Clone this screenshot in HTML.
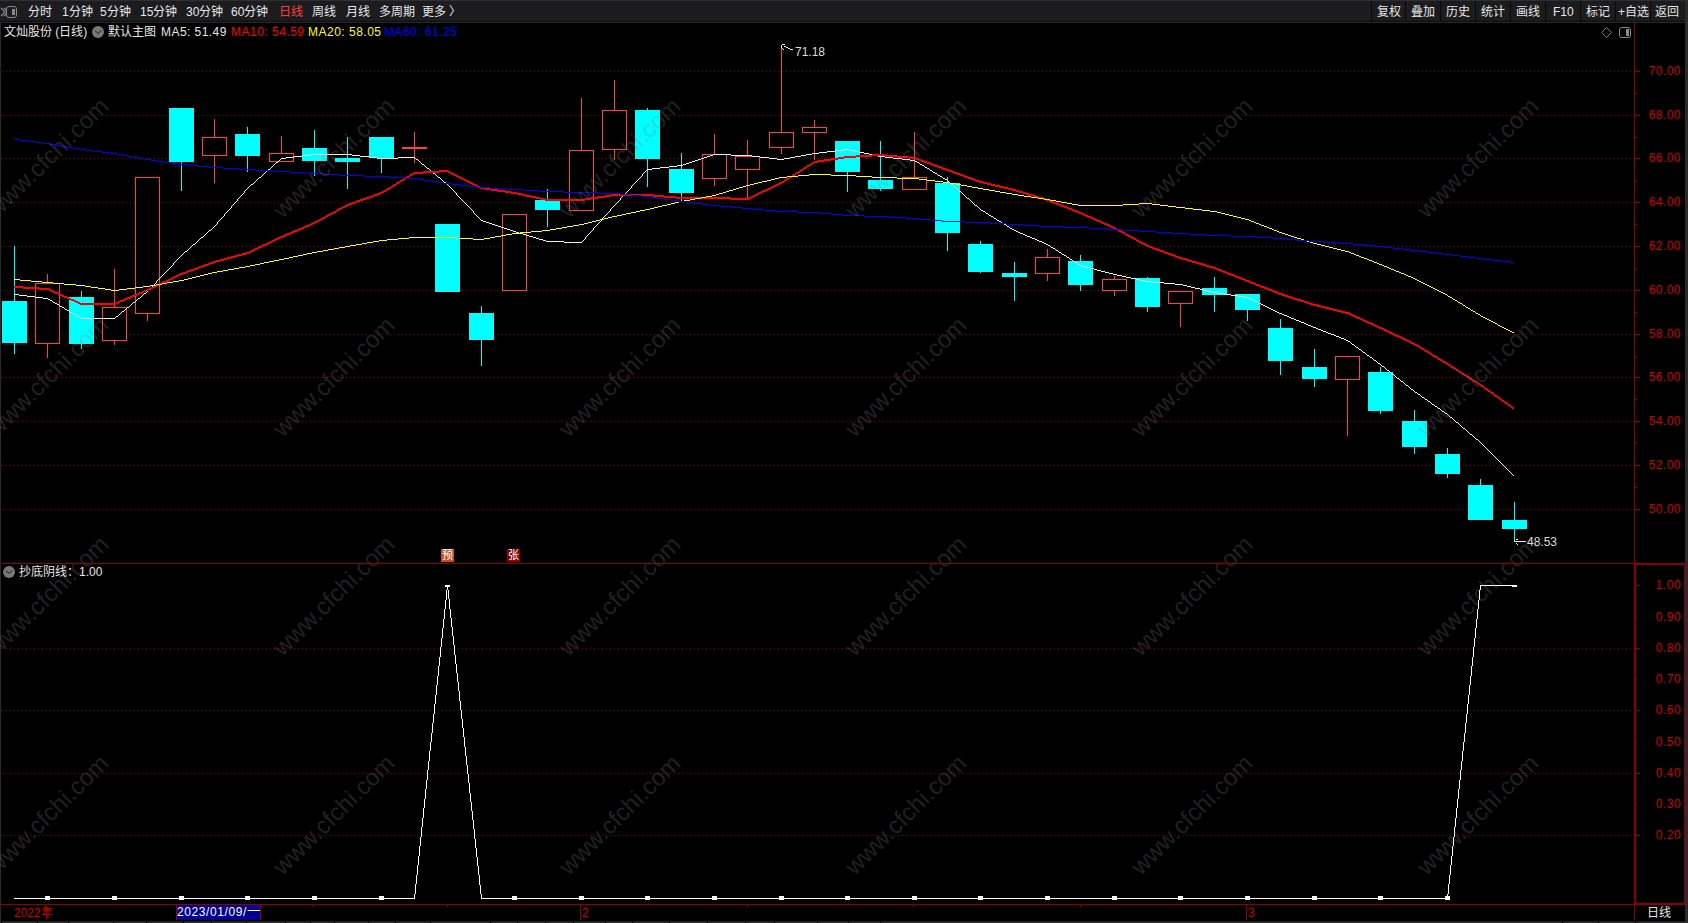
<!DOCTYPE html>
<html lang="zh-CN"><head><meta charset="utf-8"><style>
*{margin:0;padding:0;box-sizing:border-box}
html,body{width:1688px;height:923px;overflow:hidden;background:#000}
body{position:relative;font-family:"Liberation Sans",sans-serif;font-size:12px;color:#e6e6e6}
.abs{position:absolute;white-space:nowrap;line-height:14px}
#tb{position:absolute;left:0;top:0;width:1688px;height:22px;background:#1c1c1e;border-top:1px solid #2c2f35;border-bottom:1px solid #0c0c0c}
#tb .t{position:absolute;top:4px;line-height:14px;white-space:nowrap;color:#e8e8e8}
.btn{position:absolute;top:1px;height:20px;background:#1c1c1e;border-left:1px solid #080808}
.yl{position:absolute;left:1631px;width:50px;text-align:right;color:#cc0000;line-height:16px;font-size:12px;letter-spacing:0.45px}
svg{position:absolute;left:0;top:0}
</style></head><body>
<div id="tb">
<svg width="20" height="21" style="left:0;top:0"><path d="M1,7 l4,4 l-4,4 M4,7 l4,4 l-4,4" stroke="#8a8a8a" stroke-width="1.2" fill="none"/><rect x="6.5" y="5.5" width="10" height="11" rx="2.5" fill="#1c1c1e" stroke="#8a8a8a"/><rect x="12" y="8" width="3" height="6" fill="#8a8a8a"/></svg>
<span class="t" style="left:28px">分时</span>
<span class="t" style="left:62px">1分钟</span>
<span class="t" style="left:100px">5分钟</span>
<span class="t" style="left:140px">15分钟</span>
<span class="t" style="left:186px">30分钟</span>
<span class="t" style="left:231px">60分钟</span>
<span class="t" style="left:279px;color:#ff3c3c">日线</span>
<span class="t" style="left:312px">周线</span>
<span class="t" style="left:346px">月线</span>
<span class="t" style="left:379px">多周期</span>
<span class="t" style="left:422px">更多 〉</span>
</div>
<div class="btn" style="left:1371px;width:35px"></div>
<div class="btn" style="left:1405px;width:35px"></div>
<div class="btn" style="left:1440px;width:35px"></div>
<div class="btn" style="left:1475px;width:35px"></div>
<div class="btn" style="left:1510px;width:35px"></div>
<div class="btn" style="left:1545px;width:35px"></div>
<div class="btn" style="left:1580px;width:35px"></div>
<div class="btn" style="left:1615px;width:35px"></div>
<div class="btn" style="left:1650px;width:35px"></div>
<div class="abs" style="left:1377px;top:5px">复权</div>
<div class="abs" style="left:1411px;top:5px">叠加</div>
<div class="abs" style="left:1446px;top:5px">历史</div>
<div class="abs" style="left:1481px;top:5px">统计</div>
<div class="abs" style="left:1516px;top:5px">画线</div>
<div class="abs" style="left:1553px;top:5px">F10</div>
<div class="abs" style="left:1586px;top:5px">标记</div>
<div class="abs" style="left:1618px;top:5px">+自选</div>
<div class="abs" style="left:1655px;top:5px">返回</div>
<div style="position:absolute;left:0;top:22px;width:1688px;height:1px;background:#2a2a2a"></div>
<div style="position:absolute;left:0;top:22px;width:1px;height:901px;background:#2a2a2a"></div>
<div style="position:absolute;left:1685px;top:0;width:3px;height:923px;background:#2b2b2b"></div>
<svg width="1688" height="923" shape-rendering="crispEdges">
<line x1="2" y1="71.5" x2="1632" y2="71.5" stroke="#8c0000" stroke-width="1" stroke-dasharray="1 3"/>
<line x1="2" y1="115.5" x2="1632" y2="115.5" stroke="#8c0000" stroke-width="1" stroke-dasharray="1 3"/>
<line x1="2" y1="158.5" x2="1632" y2="158.5" stroke="#8c0000" stroke-width="1" stroke-dasharray="1 3"/>
<line x1="2" y1="202.5" x2="1632" y2="202.5" stroke="#8c0000" stroke-width="1" stroke-dasharray="1 3"/>
<line x1="2" y1="246.5" x2="1632" y2="246.5" stroke="#8c0000" stroke-width="1" stroke-dasharray="1 3"/>
<line x1="2" y1="290.5" x2="1632" y2="290.5" stroke="#8c0000" stroke-width="1" stroke-dasharray="1 3"/>
<line x1="2" y1="334.5" x2="1632" y2="334.5" stroke="#8c0000" stroke-width="1" stroke-dasharray="1 3"/>
<line x1="2" y1="377.5" x2="1632" y2="377.5" stroke="#8c0000" stroke-width="1" stroke-dasharray="1 3"/>
<line x1="2" y1="421.5" x2="1632" y2="421.5" stroke="#8c0000" stroke-width="1" stroke-dasharray="1 3"/>
<line x1="2" y1="465.5" x2="1632" y2="465.5" stroke="#8c0000" stroke-width="1" stroke-dasharray="1 3"/>
<line x1="2" y1="509.5" x2="1632" y2="509.5" stroke="#8c0000" stroke-width="1" stroke-dasharray="1 3"/>
<line x1="2" y1="648.5" x2="1632" y2="648.5" stroke="#8c0000" stroke-width="1" stroke-dasharray="1 3"/>
<line x1="2" y1="710.5" x2="1632" y2="710.5" stroke="#8c0000" stroke-width="1" stroke-dasharray="1 3"/>
<line x1="2" y1="773.5" x2="1632" y2="773.5" stroke="#8c0000" stroke-width="1" stroke-dasharray="1 3"/>
<line x1="2" y1="835.5" x2="1632" y2="835.5" stroke="#8c0000" stroke-width="1" stroke-dasharray="1 3"/>
<rect x="14" y="246" width="1" height="55" fill="#00ffff"/>
<rect x="14" y="343" width="1" height="11" fill="#00ffff"/>
<rect x="2" y="301" width="25" height="42" fill="#00ffff"/>
<rect x="47" y="274" width="1" height="9" fill="#ff4040"/>
<rect x="47" y="344" width="1" height="14" fill="#ff4040"/>
<rect x="35" y="283" width="25" height="61" fill="#000"/>
<path d="M35,283h25v61h-25z M36,284v59h23v-59z" fill="#ff4040" fill-rule="evenodd"/>
<rect x="81" y="291" width="1" height="6" fill="#00ffff"/>
<rect x="81" y="344" width="1" height="5" fill="#00ffff"/>
<rect x="69" y="297" width="25" height="47" fill="#00ffff"/>
<rect x="114" y="269" width="1" height="38" fill="#ff4040"/>
<rect x="114" y="341" width="1" height="4" fill="#ff4040"/>
<rect x="102" y="307" width="25" height="34" fill="#000"/>
<path d="M102,307h25v34h-25z M103,308v32h23v-32z" fill="#ff4040" fill-rule="evenodd"/>
<rect x="147" y="314" width="1" height="7" fill="#ff4040"/>
<rect x="135" y="177" width="25" height="137" fill="#000"/>
<path d="M135,177h25v137h-25z M136,178v135h23v-135z" fill="#ff4040" fill-rule="evenodd"/>
<rect x="181" y="162" width="1" height="29" fill="#00ffff"/>
<rect x="169" y="108" width="25" height="54" fill="#00ffff"/>
<rect x="214" y="119" width="1" height="18" fill="#ff4040"/>
<rect x="214" y="156" width="1" height="27" fill="#ff4040"/>
<rect x="202" y="137" width="25" height="19" fill="#000"/>
<path d="M202,137h25v19h-25z M203,138v17h23v-17z" fill="#ff4040" fill-rule="evenodd"/>
<rect x="247" y="127" width="1" height="7" fill="#00ffff"/>
<rect x="247" y="156" width="1" height="16" fill="#00ffff"/>
<rect x="235" y="134" width="25" height="22" fill="#00ffff"/>
<rect x="281" y="136" width="1" height="17" fill="#ff4040"/>
<rect x="269" y="153" width="25" height="9" fill="#000"/>
<path d="M269,153h25v9h-25z M270,154v7h23v-7z" fill="#ff4040" fill-rule="evenodd"/>
<rect x="314" y="130" width="1" height="18" fill="#00ffff"/>
<rect x="314" y="161" width="1" height="15" fill="#00ffff"/>
<rect x="302" y="148" width="25" height="13" fill="#00ffff"/>
<rect x="347" y="137" width="1" height="21" fill="#00ffff"/>
<rect x="347" y="162" width="1" height="27" fill="#00ffff"/>
<rect x="335" y="158" width="25" height="4" fill="#00ffff"/>
<rect x="381" y="158" width="1" height="15" fill="#00ffff"/>
<rect x="369" y="137" width="25" height="21" fill="#00ffff"/>
<rect x="414" y="132" width="1" height="31" fill="#ff4040"/>
<rect x="402" y="147" width="25" height="2" fill="#ff4040"/>
<rect x="435" y="224" width="25" height="68" fill="#00ffff"/>
<rect x="481" y="306" width="1" height="7" fill="#00ffff"/>
<rect x="481" y="340" width="1" height="26" fill="#00ffff"/>
<rect x="469" y="313" width="25" height="27" fill="#00ffff"/>
<rect x="502" y="214" width="25" height="77" fill="#000"/>
<path d="M502,214h25v77h-25z M503,215v75h23v-75z" fill="#ff4040" fill-rule="evenodd"/>
<rect x="547" y="189" width="1" height="11" fill="#00ffff"/>
<rect x="547" y="210" width="1" height="17" fill="#00ffff"/>
<rect x="535" y="200" width="25" height="10" fill="#00ffff"/>
<rect x="581" y="98" width="1" height="52" fill="#ff4040"/>
<rect x="569" y="150" width="25" height="61" fill="#000"/>
<path d="M569,150h25v61h-25z M570,151v59h23v-59z" fill="#ff4040" fill-rule="evenodd"/>
<rect x="614" y="80" width="1" height="30" fill="#ff4040"/>
<rect x="614" y="150" width="1" height="10" fill="#ff4040"/>
<rect x="602" y="110" width="25" height="40" fill="#000"/>
<path d="M602,110h25v40h-25z M603,111v38h23v-38z" fill="#ff4040" fill-rule="evenodd"/>
<rect x="647" y="108" width="1" height="2" fill="#00ffff"/>
<rect x="647" y="159" width="1" height="28" fill="#00ffff"/>
<rect x="635" y="110" width="25" height="49" fill="#00ffff"/>
<rect x="681" y="153" width="1" height="16" fill="#00ffff"/>
<rect x="681" y="193" width="1" height="8" fill="#00ffff"/>
<rect x="669" y="169" width="25" height="24" fill="#00ffff"/>
<rect x="714" y="134" width="1" height="20" fill="#ff4040"/>
<rect x="714" y="179" width="1" height="7" fill="#ff4040"/>
<rect x="702" y="154" width="25" height="25" fill="#000"/>
<path d="M702,154h25v25h-25z M703,155v23h23v-23z" fill="#ff4040" fill-rule="evenodd"/>
<rect x="747" y="140" width="1" height="16" fill="#ff4040"/>
<rect x="747" y="170" width="1" height="30" fill="#ff4040"/>
<rect x="735" y="156" width="25" height="14" fill="#000"/>
<path d="M735,156h25v14h-25z M736,157v12h23v-12z" fill="#ff4040" fill-rule="evenodd"/>
<rect x="781" y="48" width="1" height="84" fill="#ff4040"/>
<rect x="781" y="148" width="1" height="6" fill="#ff4040"/>
<rect x="769" y="132" width="25" height="16" fill="#000"/>
<path d="M769,132h25v16h-25z M770,133v14h23v-14z" fill="#ff4040" fill-rule="evenodd"/>
<rect x="814" y="120" width="1" height="7" fill="#ff4040"/>
<rect x="814" y="133" width="1" height="27" fill="#ff4040"/>
<rect x="802" y="127" width="25" height="6" fill="#000"/>
<path d="M802,127h25v6h-25z M803,128v4h23v-4z" fill="#ff4040" fill-rule="evenodd"/>
<rect x="847" y="172" width="1" height="20" fill="#00ffff"/>
<rect x="835" y="141" width="25" height="31" fill="#00ffff"/>
<rect x="880" y="141" width="1" height="39" fill="#00ffff"/>
<rect x="880" y="189" width="1" height="2" fill="#00ffff"/>
<rect x="868" y="180" width="25" height="9" fill="#00ffff"/>
<rect x="914" y="132" width="1" height="45" fill="#ff4040"/>
<rect x="902" y="177" width="25" height="13" fill="#000"/>
<path d="M902,177h25v13h-25z M903,178v11h23v-11z" fill="#ff4040" fill-rule="evenodd"/>
<rect x="947" y="177" width="1" height="6" fill="#00ffff"/>
<rect x="947" y="233" width="1" height="18" fill="#00ffff"/>
<rect x="935" y="183" width="25" height="50" fill="#00ffff"/>
<rect x="980" y="241" width="1" height="3" fill="#00ffff"/>
<rect x="980" y="272" width="1" height="1" fill="#00ffff"/>
<rect x="968" y="244" width="25" height="28" fill="#00ffff"/>
<rect x="1014" y="262" width="1" height="11" fill="#00ffff"/>
<rect x="1014" y="277" width="1" height="24" fill="#00ffff"/>
<rect x="1002" y="273" width="25" height="4" fill="#00ffff"/>
<rect x="1047" y="249" width="1" height="8" fill="#ff4040"/>
<rect x="1047" y="274" width="1" height="7" fill="#ff4040"/>
<rect x="1035" y="257" width="25" height="17" fill="#000"/>
<path d="M1035,257h25v17h-25z M1036,258v15h23v-15z" fill="#ff4040" fill-rule="evenodd"/>
<rect x="1080" y="255" width="1" height="6" fill="#00ffff"/>
<rect x="1080" y="285" width="1" height="6" fill="#00ffff"/>
<rect x="1068" y="261" width="25" height="24" fill="#00ffff"/>
<rect x="1114" y="276" width="1" height="3" fill="#ff4040"/>
<rect x="1114" y="291" width="1" height="5" fill="#ff4040"/>
<rect x="1102" y="279" width="25" height="12" fill="#000"/>
<path d="M1102,279h25v12h-25z M1103,280v10h23v-10z" fill="#ff4040" fill-rule="evenodd"/>
<rect x="1147" y="277" width="1" height="1" fill="#00ffff"/>
<rect x="1147" y="307" width="1" height="5" fill="#00ffff"/>
<rect x="1135" y="278" width="25" height="29" fill="#00ffff"/>
<rect x="1180" y="304" width="1" height="23" fill="#ff4040"/>
<rect x="1168" y="291" width="25" height="13" fill="#000"/>
<path d="M1168,291h25v13h-25z M1169,292v11h23v-11z" fill="#ff4040" fill-rule="evenodd"/>
<rect x="1214" y="277" width="1" height="11" fill="#00ffff"/>
<rect x="1214" y="295" width="1" height="17" fill="#00ffff"/>
<rect x="1202" y="288" width="25" height="7" fill="#00ffff"/>
<rect x="1247" y="310" width="1" height="11" fill="#00ffff"/>
<rect x="1235" y="294" width="25" height="16" fill="#00ffff"/>
<rect x="1280" y="319" width="1" height="9" fill="#00ffff"/>
<rect x="1280" y="361" width="1" height="14" fill="#00ffff"/>
<rect x="1268" y="328" width="25" height="33" fill="#00ffff"/>
<rect x="1314" y="349" width="1" height="18" fill="#00ffff"/>
<rect x="1314" y="379" width="1" height="8" fill="#00ffff"/>
<rect x="1302" y="367" width="25" height="12" fill="#00ffff"/>
<rect x="1347" y="380" width="1" height="56" fill="#ff4040"/>
<rect x="1335" y="356" width="25" height="24" fill="#000"/>
<path d="M1335,356h25v24h-25z M1336,357v22h23v-22z" fill="#ff4040" fill-rule="evenodd"/>
<rect x="1380" y="367" width="1" height="5" fill="#00ffff"/>
<rect x="1380" y="411" width="1" height="3" fill="#00ffff"/>
<rect x="1368" y="372" width="25" height="39" fill="#00ffff"/>
<rect x="1414" y="410" width="1" height="11" fill="#00ffff"/>
<rect x="1414" y="447" width="1" height="7" fill="#00ffff"/>
<rect x="1402" y="421" width="25" height="26" fill="#00ffff"/>
<rect x="1447" y="448" width="1" height="6" fill="#00ffff"/>
<rect x="1447" y="474" width="1" height="4" fill="#00ffff"/>
<rect x="1435" y="454" width="25" height="20" fill="#00ffff"/>
<rect x="1480" y="479" width="1" height="6" fill="#00ffff"/>
<rect x="1468" y="485" width="25" height="35" fill="#00ffff"/>
<rect x="1514" y="502" width="1" height="18" fill="#00ffff"/>
<rect x="1514" y="529" width="1" height="11" fill="#00ffff"/>
<rect x="1502" y="520" width="25" height="9" fill="#00ffff"/>
<path d="M843 149h7v1h-7zM835 150h8v1h-8zM850 150h5v1h-5zM827 151h8v1h-8zM855 151h4v1h-4zM819 152h8v1h-8zM859 152h5v1h-5zM812 153h7v1h-7zM864 153h5v1h-5zM310 154h42v1h-42zM713 154h18v1h-18zM806 154h6v1h-6zM869 154h4v1h-4zM302 155h8v1h-8zM352 155h8v1h-8zM710 155h3v1h-3zM731 155h21v1h-21zM801 155h5v1h-5zM873 155h5v1h-5zM294 156h8v1h-8zM360 156h9v1h-9zM707 156h3v1h-3zM752 156h8v1h-8zM795 156h6v1h-6zM878 156h7v1h-7zM286 157h8v1h-8zM369 157h8v1h-8zM398 157h17v1h-17zM704 157h3v1h-3zM760 157h9v1h-9zM790 157h5v1h-5zM885 157h8v1h-8zM281 158h5v1h-5zM377 158h21v1h-21zM415 158h1v1h-1zM701 158h3v1h-3zM769 158h8v1h-8zM784 158h6v1h-6zM893 158h9v1h-9zM280 159h1v1h-1zM416 159h2v1h-2zM698 159h3v1h-3zM777 159h7v1h-7zM902 159h8v1h-8zM279 160h1v1h-1zM418 160h1v1h-1zM695 160h3v1h-3zM910 160h5v1h-5zM278 161h1v1h-1zM419 161h1v1h-1zM692 161h3v1h-3zM915 161h2v1h-2zM276 162h2v1h-2zM420 162h1v1h-1zM689 162h3v1h-3zM917 162h2v1h-2zM275 163h1v1h-1zM421 163h1v1h-1zM686 163h3v1h-3zM919 163h1v1h-1zM274 164h1v1h-1zM422 164h2v1h-2zM683 164h3v1h-3zM920 164h2v1h-2zM273 165h1v1h-1zM424 165h1v1h-1zM677 165h6v1h-6zM922 165h2v1h-2zM272 166h1v1h-1zM425 166h1v1h-1zM669 166h8v1h-8zM924 166h1v1h-1zM271 167h1v1h-1zM426 167h1v1h-1zM660 167h9v1h-9zM925 167h2v1h-2zM270 168h1v1h-1zM427 168h2v1h-2zM652 168h8v1h-8zM927 168h2v1h-2zM268 169h2v1h-2zM429 169h1v1h-1zM647 169h5v1h-5zM929 169h1v1h-1zM267 170h1v1h-1zM430 170h1v1h-1zM646 170h1v1h-1zM930 170h2v1h-2zM266 171h1v1h-1zM431 171h1v1h-1zM645 171h1v1h-1zM932 171h1v1h-1zM265 172h1v1h-1zM432 172h1v1h-1zM644 172h1v1h-1zM933 172h2v1h-2zM264 173h1v1h-1zM433 173h2v1h-2zM643 173h1v1h-1zM935 173h2v1h-2zM263 174h1v1h-1zM435 174h1v1h-1zM642 174h1v1h-1zM937 174h1v1h-1zM262 175h1v1h-1zM436 175h1v1h-1zM642 175h1v1h-1zM938 175h2v1h-2zM261 176h1v1h-1zM437 176h1v1h-1zM641 176h1v1h-1zM940 176h2v1h-2zM259 177h2v1h-2zM438 177h2v1h-2zM640 177h1v1h-1zM942 177h1v1h-1zM258 178h1v1h-1zM440 178h1v1h-1zM639 178h1v1h-1zM943 178h2v1h-2zM257 179h1v1h-1zM441 179h1v1h-1zM638 179h1v1h-1zM945 179h2v1h-2zM256 180h1v1h-1zM442 180h1v1h-1zM637 180h1v1h-1zM947 180h1v1h-1zM255 181h1v1h-1zM443 181h1v1h-1zM636 181h1v1h-1zM948 181h1v1h-1zM254 182h1v1h-1zM444 182h2v1h-2zM635 182h1v1h-1zM949 182h1v1h-1zM253 183h1v1h-1zM446 183h1v1h-1zM634 183h1v1h-1zM950 183h1v1h-1zM251 184h2v1h-2zM447 184h1v1h-1zM633 184h1v1h-1zM951 184h2v1h-2zM250 185h1v1h-1zM448 185h1v1h-1zM632 185h1v1h-1zM953 185h1v1h-1zM249 186h1v1h-1zM449 186h1v1h-1zM631 186h1v1h-1zM954 186h1v1h-1zM248 187h1v1h-1zM450 187h1v1h-1zM631 187h1v1h-1zM955 187h1v1h-1zM247 188h1v1h-1zM451 188h1v1h-1zM630 188h1v1h-1zM956 188h1v1h-1zM246 189h1v1h-1zM452 189h1v1h-1zM629 189h1v1h-1zM957 189h1v1h-1zM245 190h1v1h-1zM453 190h1v1h-1zM628 190h1v1h-1zM958 190h1v1h-1zM244 191h1v1h-1zM454 191h1v1h-1zM627 191h1v1h-1zM959 191h2v1h-2zM244 192h1v1h-1zM455 192h1v1h-1zM626 192h1v1h-1zM961 192h1v1h-1zM243 193h1v1h-1zM456 193h1v1h-1zM625 193h1v1h-1zM962 193h1v1h-1zM242 194h1v1h-1zM456 194h1v1h-1zM624 194h1v1h-1zM963 194h1v1h-1zM241 195h1v1h-1zM457 195h1v1h-1zM623 195h1v1h-1zM964 195h1v1h-1zM240 196h1v1h-1zM458 196h1v1h-1zM622 196h1v1h-1zM965 196h1v1h-1zM239 197h1v1h-1zM459 197h1v1h-1zM621 197h1v1h-1zM966 197h1v1h-1zM238 198h1v1h-1zM460 198h1v1h-1zM620 198h1v1h-1zM967 198h2v1h-2zM237 199h1v1h-1zM461 199h1v1h-1zM620 199h1v1h-1zM969 199h1v1h-1zM237 200h1v1h-1zM462 200h1v1h-1zM619 200h1v1h-1zM970 200h1v1h-1zM236 201h1v1h-1zM463 201h1v1h-1zM618 201h1v1h-1zM971 201h1v1h-1zM235 202h1v1h-1zM464 202h1v1h-1zM617 202h1v1h-1zM972 202h1v1h-1zM234 203h1v1h-1zM465 203h1v1h-1zM616 203h1v1h-1zM973 203h1v1h-1zM233 204h1v1h-1zM466 204h1v1h-1zM615 204h1v1h-1zM974 204h1v1h-1zM232 205h1v1h-1zM467 205h1v1h-1zM614 205h1v1h-1zM975 205h2v1h-2zM231 206h1v1h-1zM468 206h1v1h-1zM613 206h1v1h-1zM977 206h1v1h-1zM231 207h1v1h-1zM469 207h1v1h-1zM612 207h1v1h-1zM978 207h1v1h-1zM230 208h1v1h-1zM470 208h1v1h-1zM611 208h1v1h-1zM979 208h1v1h-1zM229 209h1v1h-1zM471 209h1v1h-1zM610 209h1v1h-1zM980 209h1v1h-1zM228 210h1v1h-1zM472 210h1v1h-1zM610 210h1v1h-1zM981 210h2v1h-2zM227 211h1v1h-1zM473 211h1v1h-1zM609 211h1v1h-1zM983 211h2v1h-2zM226 212h1v1h-1zM473 212h1v1h-1zM608 212h1v1h-1zM985 212h1v1h-1zM225 213h1v1h-1zM474 213h1v1h-1zM607 213h1v1h-1zM986 213h2v1h-2zM224 214h1v1h-1zM475 214h1v1h-1zM606 214h1v1h-1zM988 214h1v1h-1zM224 215h1v1h-1zM476 215h1v1h-1zM605 215h1v1h-1zM989 215h2v1h-2zM223 216h1v1h-1zM477 216h1v1h-1zM604 216h1v1h-1zM991 216h2v1h-2zM222 217h1v1h-1zM478 217h1v1h-1zM603 217h1v1h-1zM993 217h1v1h-1zM221 218h1v1h-1zM479 218h1v1h-1zM602 218h1v1h-1zM994 218h2v1h-2zM220 219h1v1h-1zM480 219h1v1h-1zM602 219h1v1h-1zM996 219h1v1h-1zM219 220h1v1h-1zM481 220h2v1h-2zM601 220h1v1h-1zM997 220h2v1h-2zM218 221h1v1h-1zM483 221h3v1h-3zM600 221h1v1h-1zM999 221h2v1h-2zM217 222h1v1h-1zM486 222h3v1h-3zM599 222h1v1h-1zM1001 222h1v1h-1zM217 223h1v1h-1zM489 223h3v1h-3zM598 223h1v1h-1zM1002 223h2v1h-2zM216 224h1v1h-1zM492 224h3v1h-3zM597 224h1v1h-1zM1004 224h2v1h-2zM215 225h1v1h-1zM495 225h3v1h-3zM596 225h1v1h-1zM1006 225h1v1h-1zM214 226h1v1h-1zM498 226h3v1h-3zM595 226h1v1h-1zM1007 226h2v1h-2zM213 227h1v1h-1zM501 227h3v1h-3zM594 227h1v1h-1zM1009 227h1v1h-1zM212 228h1v1h-1zM504 228h3v1h-3zM593 228h1v1h-1zM1010 228h2v1h-2zM211 229h1v1h-1zM507 229h3v1h-3zM593 229h1v1h-1zM1012 229h2v1h-2zM209 230h2v1h-2zM510 230h3v1h-3zM592 230h1v1h-1zM1014 230h2v1h-2zM208 231h1v1h-1zM513 231h3v1h-3zM591 231h1v1h-1zM1016 231h2v1h-2zM207 232h1v1h-1zM516 232h3v1h-3zM590 232h1v1h-1zM1018 232h2v1h-2zM206 233h1v1h-1zM519 233h4v1h-4zM589 233h1v1h-1zM1020 233h3v1h-3zM205 234h1v1h-1zM523 234h3v1h-3zM588 234h1v1h-1zM1023 234h2v1h-2zM204 235h1v1h-1zM526 235h3v1h-3zM587 235h1v1h-1zM1025 235h2v1h-2zM203 236h1v1h-1zM529 236h4v1h-4zM586 236h1v1h-1zM1027 236h3v1h-3zM201 237h2v1h-2zM533 237h3v1h-3zM585 237h1v1h-1zM1030 237h2v1h-2zM200 238h1v1h-1zM536 238h3v1h-3zM585 238h1v1h-1zM1032 238h3v1h-3zM199 239h1v1h-1zM539 239h4v1h-4zM584 239h1v1h-1zM1035 239h2v1h-2zM198 240h1v1h-1zM543 240h3v1h-3zM583 240h1v1h-1zM1037 240h2v1h-2zM197 241h1v1h-1zM546 241h18v1h-18zM582 241h1v1h-1zM1039 241h3v1h-3zM196 242h1v1h-1zM564 242h18v1h-18zM1042 242h2v1h-2zM195 243h1v1h-1zM1044 243h2v1h-2zM193 244h2v1h-2zM1046 244h2v1h-2zM192 245h1v1h-1zM1048 245h2v1h-2zM191 246h1v1h-1zM1050 246h1v1h-1zM190 247h1v1h-1zM1051 247h2v1h-2zM189 248h1v1h-1zM1053 248h2v1h-2zM188 249h1v1h-1zM1055 249h1v1h-1zM187 250h1v1h-1zM1056 250h2v1h-2zM185 251h2v1h-2zM1058 251h1v1h-1zM184 252h1v1h-1zM1059 252h2v1h-2zM183 253h1v1h-1zM1061 253h1v1h-1zM182 254h1v1h-1zM1062 254h2v1h-2zM181 255h1v1h-1zM1064 255h2v1h-2zM180 256h1v1h-1zM1066 256h1v1h-1zM179 257h1v1h-1zM1067 257h2v1h-2zM178 258h1v1h-1zM1069 258h1v1h-1zM177 259h1v1h-1zM1070 259h2v1h-2zM176 260h1v1h-1zM1072 260h1v1h-1zM175 261h1v1h-1zM1073 261h2v1h-2zM174 262h1v1h-1zM1075 262h2v1h-2zM173 263h1v1h-1zM1077 263h1v1h-1zM173 264h1v1h-1zM1078 264h2v1h-2zM172 265h1v1h-1zM1080 265h2v1h-2zM171 266h1v1h-1zM1082 266h4v1h-4zM170 267h1v1h-1zM1086 267h4v1h-4zM169 268h1v1h-1zM1090 268h4v1h-4zM168 269h1v1h-1zM1094 269h3v1h-3zM167 270h1v1h-1zM1097 270h4v1h-4zM166 271h1v1h-1zM1101 271h4v1h-4zM165 272h1v1h-1zM1105 272h4v1h-4zM164 273h1v1h-1zM1109 273h4v1h-4zM163 274h1v1h-1zM1113 274h4v1h-4zM162 275h1v1h-1zM1117 275h5v1h-5zM161 276h1v1h-1zM1122 276h4v1h-4zM160 277h1v1h-1zM1126 277h5v1h-5zM159 278h1v1h-1zM1131 278h5v1h-5zM158 279h1v1h-1zM1136 279h4v1h-4zM157 280h1v1h-1zM1140 280h5v1h-5zM156 281h1v1h-1zM1145 281h8v1h-8zM156 282h1v1h-1zM1153 282h11v1h-11zM155 283h1v1h-1zM1164 283h11v1h-11zM154 284h1v1h-1zM1175 284h8v1h-8zM153 285h1v1h-1zM1183 285h4v1h-4zM152 286h1v1h-1zM1187 286h4v1h-4zM151 287h1v1h-1zM1191 287h4v1h-4zM150 288h1v1h-1zM1195 288h5v1h-5zM149 289h1v1h-1zM1200 289h4v1h-4zM148 290h1v1h-1zM1204 290h4v1h-4zM147 291h1v1h-1zM1208 291h4v1h-4zM146 292h1v1h-1zM1212 292h6v1h-6zM144 293h2v1h-2zM1218 293h6v1h-6zM14 294h5v1h-5zM143 294h1v1h-1zM1224 294h7v1h-7zM19 295h8v1h-8zM142 295h1v1h-1zM1231 295h7v1h-7zM27 296h8v1h-8zM141 296h1v1h-1zM1238 296h6v1h-6zM35 297h8v1h-8zM140 297h1v1h-1zM1244 297h5v1h-5zM43 298h5v1h-5zM138 298h2v1h-2zM1249 298h2v1h-2zM48 299h2v1h-2zM137 299h1v1h-1zM1251 299h2v1h-2zM50 300h2v1h-2zM136 300h1v1h-1zM1253 300h2v1h-2zM52 301h1v1h-1zM135 301h1v1h-1zM1255 301h2v1h-2zM53 302h2v1h-2zM133 302h2v1h-2zM1257 302h2v1h-2zM55 303h2v1h-2zM132 303h1v1h-1zM1259 303h2v1h-2zM57 304h2v1h-2zM131 304h1v1h-1zM1261 304h2v1h-2zM59 305h1v1h-1zM130 305h1v1h-1zM1263 305h2v1h-2zM60 306h2v1h-2zM129 306h1v1h-1zM1265 306h2v1h-2zM62 307h2v1h-2zM127 307h2v1h-2zM1267 307h2v1h-2zM64 308h1v1h-1zM126 308h1v1h-1zM1269 308h2v1h-2zM65 309h2v1h-2zM125 309h1v1h-1zM1271 309h2v1h-2zM67 310h2v1h-2zM124 310h1v1h-1zM1273 310h2v1h-2zM69 311h1v1h-1zM122 311h2v1h-2zM1275 311h2v1h-2zM70 312h2v1h-2zM121 312h1v1h-1zM1277 312h2v1h-2zM72 313h2v1h-2zM120 313h1v1h-1zM1279 313h3v1h-3zM74 314h2v1h-2zM119 314h1v1h-1zM1282 314h2v1h-2zM76 315h1v1h-1zM118 315h1v1h-1zM1284 315h3v1h-3zM77 316h2v1h-2zM116 316h2v1h-2zM1287 316h2v1h-2zM79 317h2v1h-2zM115 317h1v1h-1zM1289 317h2v1h-2zM81 318h34v1h-34zM1291 318h3v1h-3zM1294 319h2v1h-2zM1296 320h3v1h-3zM1299 321h2v1h-2zM1301 322h3v1h-3zM1304 323h2v1h-2zM1306 324h2v1h-2zM1308 325h3v1h-3zM1311 326h2v1h-2zM1313 327h3v1h-3zM1316 328h2v1h-2zM1318 329h3v1h-3zM1321 330h2v1h-2zM1323 331h3v1h-3zM1326 332h2v1h-2zM1328 333h3v1h-3zM1331 334h3v1h-3zM1334 335h2v1h-2zM1336 336h3v1h-3zM1339 337h2v1h-2zM1341 338h3v1h-3zM1344 339h2v1h-2zM1346 340h2v1h-2zM1348 341h2v1h-2zM1350 342h1v1h-1zM1351 343h1v1h-1zM1352 344h2v1h-2zM1354 345h1v1h-1zM1355 346h1v1h-1zM1356 347h2v1h-2zM1358 348h1v1h-1zM1359 349h2v1h-2zM1361 350h1v1h-1zM1362 351h1v1h-1zM1363 352h2v1h-2zM1365 353h1v1h-1zM1366 354h1v1h-1zM1367 355h2v1h-2zM1369 356h1v1h-1zM1370 357h2v1h-2zM1372 358h1v1h-1zM1373 359h1v1h-1zM1374 360h2v1h-2zM1376 361h1v1h-1zM1377 362h1v1h-1zM1378 363h2v1h-2zM1380 364h1v1h-1zM1381 365h1v1h-1zM1382 366h2v1h-2zM1384 367h1v1h-1zM1385 368h1v1h-1zM1386 369h1v1h-1zM1387 370h2v1h-2zM1389 371h1v1h-1zM1390 372h1v1h-1zM1391 373h1v1h-1zM1392 374h2v1h-2zM1394 375h1v1h-1zM1395 376h1v1h-1zM1396 377h1v1h-1zM1397 378h2v1h-2zM1399 379h1v1h-1zM1400 380h1v1h-1zM1401 381h2v1h-2zM1403 382h1v1h-1zM1404 383h1v1h-1zM1405 384h1v1h-1zM1406 385h2v1h-2zM1408 386h1v1h-1zM1409 387h1v1h-1zM1410 388h1v1h-1zM1411 389h2v1h-2zM1413 390h1v1h-1zM1414 391h1v1h-1zM1415 392h2v1h-2zM1417 393h1v1h-1zM1418 394h2v1h-2zM1420 395h1v1h-1zM1421 396h1v1h-1zM1422 397h2v1h-2zM1424 398h1v1h-1zM1425 399h2v1h-2zM1427 400h1v1h-1zM1428 401h2v1h-2zM1430 402h1v1h-1zM1431 403h1v1h-1zM1432 404h2v1h-2zM1434 405h1v1h-1zM1435 406h2v1h-2zM1437 407h1v1h-1zM1438 408h2v1h-2zM1440 409h1v1h-1zM1441 410h1v1h-1zM1442 411h2v1h-2zM1444 412h1v1h-1zM1445 413h2v1h-2zM1447 414h1v1h-1zM1448 415h1v1h-1zM1449 416h1v1h-1zM1450 417h2v1h-2zM1452 418h1v1h-1zM1453 419h1v1h-1zM1454 420h1v1h-1zM1455 421h1v1h-1zM1456 422h2v1h-2zM1458 423h1v1h-1zM1459 424h1v1h-1zM1460 425h1v1h-1zM1461 426h1v1h-1zM1462 427h1v1h-1zM1463 428h2v1h-2zM1465 429h1v1h-1zM1466 430h1v1h-1zM1467 431h1v1h-1zM1468 432h1v1h-1zM1469 433h1v1h-1zM1470 434h2v1h-2zM1472 435h1v1h-1zM1473 436h1v1h-1zM1474 437h1v1h-1zM1475 438h1v1h-1zM1476 439h2v1h-2zM1478 440h1v1h-1zM1479 441h1v1h-1zM1480 442h1v1h-1zM1481 443h1v1h-1zM1482 444h1v1h-1zM1483 445h1v1h-1zM1484 446h1v1h-1zM1485 447h1v1h-1zM1486 448h1v1h-1zM1487 449h1v1h-1zM1488 450h1v1h-1zM1489 451h1v1h-1zM1490 452h1v1h-1zM1491 453h1v1h-1zM1492 454h1v1h-1zM1493 455h1v1h-1zM1494 456h1v1h-1zM1495 457h1v1h-1zM1496 458h1v1h-1zM1497 459h1v1h-1zM1498 460h1v1h-1zM1499 461h1v1h-1zM1500 462h1v1h-1zM1501 463h1v1h-1zM1502 464h1v1h-1zM1503 465h1v1h-1zM1504 466h1v1h-1zM1505 467h1v1h-1zM1506 468h1v1h-1zM1507 469h1v1h-1zM1508 470h1v1h-1zM1509 471h1v1h-1zM1510 472h1v1h-1zM1511 473h1v1h-1zM1512 474h1v1h-1zM1513 475h1v1h-1z" fill="#f0f0f0"/>
<path d="M872 154h14v1h-14zM856 155h41v1h-41zM844 156h28v1h-28zM886 156h23v1h-23zM838 157h18v1h-18zM897 157h19v1h-19zM831 158h13v1h-13zM909 158h10v1h-10zM824 159h14v1h-14zM916 159h5v1h-5zM818 160h13v1h-13zM919 160h5v1h-5zM814 161h10v1h-10zM921 161h6v1h-6zM812 162h6v1h-6zM924 162h6v1h-6zM811 163h3v1h-3zM927 163h5v1h-5zM809 164h3v1h-3zM930 164h5v1h-5zM807 165h4v1h-4zM932 165h6v1h-6zM806 166h3v1h-3zM935 166h6v1h-6zM804 167h3v1h-3zM938 167h5v1h-5zM803 168h3v1h-3zM941 168h5v1h-5zM801 169h3v1h-3zM943 169h6v1h-6zM439 170h9v1h-9zM800 170h3v1h-3zM946 170h6v1h-6zM423 171h27v1h-27zM798 171h3v1h-3zM949 171h5v1h-5zM414 172h25v1h-25zM448 172h4v1h-4zM796 172h4v1h-4zM952 172h5v1h-5zM412 173h11v1h-11zM450 173h4v1h-4zM795 173h3v1h-3zM954 173h6v1h-6zM410 174h4v1h-4zM452 174h4v1h-4zM793 174h3v1h-3zM957 174h6v1h-6zM409 175h3v1h-3zM454 175h4v1h-4zM792 175h3v1h-3zM960 175h5v1h-5zM407 176h3v1h-3zM456 176h4v1h-4zM790 176h3v1h-3zM963 176h5v1h-5zM405 177h4v1h-4zM458 177h4v1h-4zM789 177h3v1h-3zM965 177h6v1h-6zM404 178h3v1h-3zM460 178h4v1h-4zM787 178h3v1h-3zM968 178h6v1h-6zM402 179h3v1h-3zM462 179h4v1h-4zM785 179h4v1h-4zM971 179h5v1h-5zM400 180h4v1h-4zM464 180h4v1h-4zM784 180h3v1h-3zM974 180h5v1h-5zM399 181h3v1h-3zM466 181h4v1h-4zM782 181h3v1h-3zM976 181h7v1h-7zM397 182h3v1h-3zM468 182h4v1h-4zM780 182h4v1h-4zM979 182h8v1h-8zM396 183h3v1h-3zM470 183h4v1h-4zM778 183h4v1h-4zM983 183h8v1h-8zM394 184h3v1h-3zM472 184h4v1h-4zM776 184h4v1h-4zM987 184h8v1h-8zM392 185h4v1h-4zM474 185h4v1h-4zM774 185h4v1h-4zM991 185h9v1h-9zM391 186h3v1h-3zM476 186h4v1h-4zM772 186h4v1h-4zM995 186h9v1h-9zM389 187h3v1h-3zM478 187h7v1h-7zM770 187h4v1h-4zM1000 187h8v1h-8zM387 188h4v1h-4zM480 188h11v1h-11zM768 188h4v1h-4zM1004 188h8v1h-8zM386 189h3v1h-3zM485 189h13v1h-13zM766 189h4v1h-4zM1008 189h8v1h-8zM384 190h3v1h-3zM491 190h14v1h-14zM763 190h5v1h-5zM1012 190h7v1h-7zM382 191h4v1h-4zM498 191h13v1h-13zM761 191h5v1h-5zM1016 191h7v1h-7zM380 192h4v1h-4zM505 192h12v1h-12zM759 192h4v1h-4zM1019 192h7v1h-7zM377 193h5v1h-5zM511 193h11v1h-11zM757 193h4v1h-4zM1023 193h6v1h-6zM374 194h6v1h-6zM517 194h9v1h-9zM611 194h42v1h-42zM755 194h4v1h-4zM1026 194h7v1h-7zM372 195h5v1h-5zM522 195h9v1h-9zM605 195h59v1h-59zM753 195h4v1h-4zM1029 195h7v1h-7zM369 196h5v1h-5zM526 196h10v1h-10zM598 196h13v1h-13zM653 196h23v1h-23zM751 196h4v1h-4zM1033 196h6v1h-6zM366 197h6v1h-6zM531 197h9v1h-9zM591 197h14v1h-14zM664 197h67v1h-67zM749 197h4v1h-4zM1036 197h7v1h-7zM363 198h6v1h-6zM536 198h9v1h-9zM585 198h13v1h-13zM676 198h75v1h-75zM1039 198h7v1h-7zM360 199h6v1h-6zM540 199h51v1h-51zM731 199h18v1h-18zM1043 199h6v1h-6zM357 200h6v1h-6zM545 200h40v1h-40zM1046 200h5v1h-5zM355 201h5v1h-5zM1049 201h5v1h-5zM352 202h5v1h-5zM1051 202h5v1h-5zM349 203h6v1h-6zM1054 203h5v1h-5zM347 204h5v1h-5zM1056 204h5v1h-5zM345 205h4v1h-4zM1059 205h5v1h-5zM343 206h4v1h-4zM1061 206h6v1h-6zM341 207h4v1h-4zM1064 207h5v1h-5zM339 208h4v1h-4zM1067 208h5v1h-5zM337 209h4v1h-4zM1069 209h5v1h-5zM336 210h3v1h-3zM1072 210h5v1h-5zM334 211h3v1h-3zM1074 211h5v1h-5zM332 212h4v1h-4zM1077 212h5v1h-5zM330 213h4v1h-4zM1079 213h5v1h-5zM328 214h4v1h-4zM1082 214h4v1h-4zM326 215h4v1h-4zM1084 215h4v1h-4zM325 216h3v1h-3zM1086 216h5v1h-5zM323 217h3v1h-3zM1088 217h5v1h-5zM321 218h4v1h-4zM1091 218h4v1h-4zM319 219h4v1h-4zM1093 219h4v1h-4zM317 220h4v1h-4zM1095 220h5v1h-5zM315 221h4v1h-4zM1097 221h5v1h-5zM313 222h4v1h-4zM1100 222h4v1h-4zM311 223h4v1h-4zM1102 223h5v1h-5zM309 224h4v1h-4zM1104 224h5v1h-5zM306 225h5v1h-5zM1107 225h4v1h-4zM304 226h5v1h-5zM1109 226h4v1h-4zM302 227h4v1h-4zM1111 227h4v1h-4zM299 228h5v1h-5zM1113 228h4v1h-4zM297 229h5v1h-5zM1115 229h4v1h-4zM294 230h5v1h-5zM1117 230h4v1h-4zM292 231h5v1h-5zM1119 231h4v1h-4zM290 232h4v1h-4zM1121 232h4v1h-4zM287 233h5v1h-5zM1123 233h3v1h-3zM285 234h5v1h-5zM1125 234h3v1h-3zM283 235h4v1h-4zM1126 235h4v1h-4zM280 236h5v1h-5zM1128 236h4v1h-4zM278 237h5v1h-5zM1130 237h4v1h-4zM276 238h4v1h-4zM1132 238h4v1h-4zM274 239h4v1h-4zM1134 239h3v1h-3zM272 240h4v1h-4zM1136 240h3v1h-3zM270 241h4v1h-4zM1137 241h4v1h-4zM268 242h4v1h-4zM1139 242h4v1h-4zM266 243h4v1h-4zM1141 243h4v1h-4zM263 244h5v1h-5zM1143 244h4v1h-4zM261 245h5v1h-5zM1145 245h4v1h-4zM259 246h4v1h-4zM1147 246h5v1h-5zM257 247h4v1h-4zM1149 247h5v1h-5zM255 248h4v1h-4zM1152 248h5v1h-5zM253 249h4v1h-4zM1154 249h6v1h-6zM251 250h4v1h-4zM1157 250h6v1h-6zM249 251h4v1h-4zM1160 251h5v1h-5zM246 252h5v1h-5zM1163 252h5v1h-5zM242 253h7v1h-7zM1165 253h6v1h-6zM238 254h8v1h-8zM1168 254h6v1h-6zM235 255h7v1h-7zM1171 255h5v1h-5zM231 256h7v1h-7zM1174 256h5v1h-5zM227 257h8v1h-8zM1176 257h6v1h-6zM224 258h7v1h-7zM1179 258h7v1h-7zM220 259h7v1h-7zM1182 259h7v1h-7zM216 260h8v1h-8zM1186 260h6v1h-6zM213 261h7v1h-7zM1189 261h7v1h-7zM210 262h6v1h-6zM1192 262h7v1h-7zM208 263h5v1h-5zM1196 263h7v1h-7zM205 264h5v1h-5zM1199 264h7v1h-7zM202 265h6v1h-6zM1203 265h6v1h-6zM199 266h6v1h-6zM1206 266h7v1h-7zM197 267h5v1h-5zM1209 267h7v1h-7zM194 268h5v1h-5zM1213 268h5v1h-5zM191 269h6v1h-6zM1216 269h5v1h-5zM188 270h6v1h-6zM1218 270h5v1h-5zM186 271h5v1h-5zM1221 271h5v1h-5zM183 272h5v1h-5zM1223 272h5v1h-5zM180 273h6v1h-6zM1226 273h5v1h-5zM178 274h5v1h-5zM1228 274h6v1h-6zM176 275h4v1h-4zM1231 275h5v1h-5zM174 276h4v1h-4zM1234 276h5v1h-5zM172 277h4v1h-4zM1236 277h5v1h-5zM170 278h4v1h-4zM1239 278h5v1h-5zM168 279h4v1h-4zM1241 279h5v1h-5zM166 280h4v1h-4zM1244 280h5v1h-5zM163 281h5v1h-5zM1246 281h5v1h-5zM161 282h5v1h-5zM1249 282h5v1h-5zM159 283h4v1h-4zM1251 283h5v1h-5zM157 284h4v1h-4zM1254 284h5v1h-5zM155 285h4v1h-4zM1256 285h5v1h-5zM14 286h9v1h-9zM153 286h4v1h-4zM1259 286h5v1h-5zM14 287h25v1h-25zM151 287h4v1h-4zM1261 287h6v1h-6zM23 288h26v1h-26zM149 288h4v1h-4zM1264 288h5v1h-5zM39 289h12v1h-12zM146 289h5v1h-5zM1267 289h5v1h-5zM49 290h4v1h-4zM144 290h5v1h-5zM1269 290h5v1h-5zM51 291h4v1h-4zM142 291h4v1h-4zM1272 291h5v1h-5zM53 292h5v1h-5zM139 292h5v1h-5zM1274 292h5v1h-5zM55 293h5v1h-5zM137 293h5v1h-5zM1277 293h5v1h-5zM58 294h4v1h-4zM135 294h4v1h-4zM1279 294h6v1h-6zM60 295h4v1h-4zM132 295h5v1h-5zM1282 295h6v1h-6zM62 296h5v1h-5zM130 296h5v1h-5zM1285 296h6v1h-6zM64 297h5v1h-5zM127 297h5v1h-5zM1288 297h6v1h-6zM67 298h4v1h-4zM125 298h5v1h-5zM1291 298h6v1h-6zM69 299h5v1h-5zM123 299h4v1h-4zM1294 299h7v1h-7zM71 300h5v1h-5zM120 300h5v1h-5zM1297 300h7v1h-7zM74 301h4v1h-4zM118 301h5v1h-5zM1301 301h6v1h-6zM76 302h4v1h-4zM116 302h4v1h-4zM1304 302h6v1h-6zM78 303h40v1h-40zM1307 303h6v1h-6zM80 304h36v1h-36zM1310 304h7v1h-7zM1313 305h8v1h-8zM1317 306h8v1h-8zM1321 307h8v1h-8zM1325 308h8v1h-8zM1329 309h8v1h-8zM1333 310h8v1h-8zM1337 311h8v1h-8zM1341 312h8v1h-8zM1345 313h6v1h-6zM1349 314h4v1h-4zM1351 315h4v1h-4zM1353 316h4v1h-4zM1355 317h5v1h-5zM1357 318h5v1h-5zM1360 319h4v1h-4zM1362 320h4v1h-4zM1364 321h4v1h-4zM1366 322h5v1h-5zM1368 323h5v1h-5zM1371 324h4v1h-4zM1373 325h4v1h-4zM1375 326h4v1h-4zM1377 327h5v1h-5zM1379 328h5v1h-5zM1382 329h4v1h-4zM1384 330h4v1h-4zM1386 331h4v1h-4zM1388 332h4v1h-4zM1390 333h4v1h-4zM1392 334h4v1h-4zM1394 335h5v1h-5zM1396 336h5v1h-5zM1399 337h4v1h-4zM1401 338h4v1h-4zM1403 339h4v1h-4zM1405 340h4v1h-4zM1407 341h4v1h-4zM1409 342h4v1h-4zM1411 343h4v1h-4zM1413 344h4v1h-4zM1415 345h4v1h-4zM1417 346h3v1h-3zM1419 347h3v1h-3zM1420 348h4v1h-4zM1422 349h3v1h-3zM1424 350h3v1h-3zM1425 351h4v1h-4zM1427 352h3v1h-3zM1429 353h3v1h-3zM1430 354h3v1h-3zM1432 355h3v1h-3zM1433 356h4v1h-4zM1435 357h3v1h-3zM1437 358h3v1h-3zM1438 359h4v1h-4zM1440 360h3v1h-3zM1442 361h3v1h-3zM1443 362h4v1h-4zM1445 363h3v1h-3zM1447 364h3v1h-3zM1448 365h3v1h-3zM1450 366h3v1h-3zM1451 367h4v1h-4zM1453 368h3v1h-3zM1455 369h3v1h-3zM1456 370h3v1h-3zM1458 371h3v1h-3zM1459 372h3v1h-3zM1461 373h3v1h-3zM1462 374h4v1h-4zM1464 375h3v1h-3zM1466 376h3v1h-3zM1467 377h3v1h-3zM1469 378h3v1h-3zM1470 379h3v1h-3zM1472 380h3v1h-3zM1473 381h4v1h-4zM1475 382h3v1h-3zM1477 383h3v1h-3zM1478 384h3v1h-3zM1480 385h3v1h-3zM1481 386h3v1h-3zM1483 387h2v1h-2zM1484 388h3v1h-3zM1485 389h3v1h-3zM1487 390h3v1h-3zM1488 391h3v1h-3zM1490 392h3v1h-3zM1491 393h3v1h-3zM1493 394h2v1h-2zM1494 395h3v1h-3zM1495 396h3v1h-3zM1497 397h3v1h-3zM1498 398h3v1h-3zM1500 399h2v1h-2zM1501 400h3v1h-3zM1502 401h3v1h-3zM1504 402h3v1h-3zM1505 403h3v1h-3zM1507 404h3v1h-3zM1508 405h3v1h-3zM1510 406h2v1h-2zM1511 407h3v1h-3zM1512 408h2v1h-2z" fill="#ff0000"/>
<path d="M809 174h22v1h-22zM798 175h11v1h-11zM831 175h25v1h-25zM787 176h11v1h-11zM856 176h16v1h-16zM779 177h8v1h-8zM872 177h25v1h-25zM775 178h4v1h-4zM897 178h22v1h-22zM771 179h4v1h-4zM919 179h8v1h-8zM767 180h4v1h-4zM927 180h8v1h-8zM762 181h5v1h-5zM935 181h8v1h-8zM758 182h4v1h-4zM943 182h7v1h-7zM754 183h4v1h-4zM950 183h6v1h-6zM750 184h4v1h-4zM956 184h5v1h-5zM746 185h4v1h-4zM961 185h6v1h-6zM743 186h3v1h-3zM967 186h5v1h-5zM739 187h4v1h-4zM972 187h6v1h-6zM736 188h3v1h-3zM978 188h5v1h-5zM733 189h3v1h-3zM983 189h6v1h-6zM729 190h4v1h-4zM989 190h6v1h-6zM726 191h3v1h-3zM995 191h5v1h-5zM723 192h3v1h-3zM1000 192h6v1h-6zM719 193h4v1h-4zM1006 193h6v1h-6zM716 194h3v1h-3zM1012 194h6v1h-6zM712 195h4v1h-4zM1018 195h6v1h-6zM706 196h6v1h-6zM1024 196h7v1h-7zM701 197h5v1h-5zM1031 197h7v1h-7zM695 198h6v1h-6zM1038 198h6v1h-6zM690 199h5v1h-5zM1044 199h6v1h-6zM684 200h6v1h-6zM1050 200h6v1h-6zM679 201h5v1h-5zM1056 201h5v1h-5zM675 202h4v1h-4zM1061 202h6v1h-6zM671 203h4v1h-4zM1067 203h5v1h-5zM1139 203h13v1h-13zM667 204h4v1h-4zM1072 204h6v1h-6zM1123 204h16v1h-16zM1152 204h8v1h-8zM662 205h5v1h-5zM1078 205h45v1h-45zM1160 205h8v1h-8zM658 206h4v1h-4zM1168 206h8v1h-8zM654 207h4v1h-4zM1176 207h9v1h-9zM650 208h4v1h-4zM1185 208h8v1h-8zM645 209h5v1h-5zM1193 209h9v1h-9zM640 210h5v1h-5zM1202 210h8v1h-8zM636 211h4v1h-4zM1210 211h7v1h-7zM631 212h5v1h-5zM1217 212h4v1h-4zM626 213h5v1h-5zM1221 213h4v1h-4zM622 214h4v1h-4zM1225 214h4v1h-4zM617 215h5v1h-5zM1229 215h4v1h-4zM612 216h5v1h-5zM1233 216h4v1h-4zM608 217h4v1h-4zM1237 217h4v1h-4zM604 218h4v1h-4zM1241 218h4v1h-4zM600 219h4v1h-4zM1245 219h4v1h-4zM596 220h4v1h-4zM1249 220h2v1h-2zM592 221h4v1h-4zM1251 221h3v1h-3zM588 222h4v1h-4zM1254 222h2v1h-2zM584 223h4v1h-4zM1256 223h3v1h-3zM579 224h5v1h-5zM1259 224h2v1h-2zM573 225h6v1h-6zM1261 225h3v1h-3zM567 226h6v1h-6zM1264 226h3v1h-3zM562 227h5v1h-5zM1267 227h2v1h-2zM556 228h6v1h-6zM1269 228h3v1h-3zM550 229h6v1h-6zM1272 229h2v1h-2zM542 230h8v1h-8zM1274 230h3v1h-3zM531 231h11v1h-11zM1277 231h2v1h-2zM520 232h11v1h-11zM1279 232h3v1h-3zM512 233h8v1h-8zM1282 233h3v1h-3zM506 234h6v1h-6zM1285 234h3v1h-3zM501 235h5v1h-5zM1288 235h3v1h-3zM495 236h6v1h-6zM1291 236h3v1h-3zM409 237h47v1h-47zM490 237h5v1h-5zM1294 237h3v1h-3zM398 238h11v1h-11zM456 238h17v1h-17zM484 238h6v1h-6zM1297 238h4v1h-4zM387 239h11v1h-11zM473 239h11v1h-11zM1301 239h3v1h-3zM379 240h8v1h-8zM1304 240h3v1h-3zM373 241h6v1h-6zM1307 241h3v1h-3zM367 242h6v1h-6zM1310 242h3v1h-3zM362 243h5v1h-5zM1313 243h4v1h-4zM356 244h6v1h-6zM1317 244h4v1h-4zM350 245h6v1h-6zM1321 245h4v1h-4zM345 246h5v1h-5zM1325 246h4v1h-4zM339 247h6v1h-6zM1329 247h4v1h-4zM334 248h5v1h-5zM1333 248h4v1h-4zM328 249h6v1h-6zM1337 249h4v1h-4zM323 250h5v1h-5zM1341 250h4v1h-4zM317 251h6v1h-6zM1345 251h4v1h-4zM312 252h5v1h-5zM1349 252h2v1h-2zM307 253h5v1h-5zM1351 253h3v1h-3zM303 254h4v1h-4zM1354 254h2v1h-2zM298 255h5v1h-5zM1356 255h3v1h-3zM293 256h5v1h-5zM1359 256h2v1h-2zM289 257h4v1h-4zM1361 257h3v1h-3zM284 258h5v1h-5zM1364 258h3v1h-3zM279 259h5v1h-5zM1367 259h2v1h-2zM274 260h5v1h-5zM1369 260h3v1h-3zM269 261h5v1h-5zM1372 261h2v1h-2zM264 262h5v1h-5zM1374 262h3v1h-3zM260 263h4v1h-4zM1377 263h2v1h-2zM255 264h5v1h-5zM1379 264h3v1h-3zM250 265h5v1h-5zM1382 265h2v1h-2zM245 266h5v1h-5zM1384 266h3v1h-3zM239 267h6v1h-6zM1387 267h2v1h-2zM234 268h5v1h-5zM1389 268h2v1h-2zM228 269h6v1h-6zM1391 269h3v1h-3zM223 270h5v1h-5zM1394 270h2v1h-2zM217 271h6v1h-6zM1396 271h3v1h-3zM212 272h5v1h-5zM1399 272h2v1h-2zM208 273h4v1h-4zM1401 273h3v1h-3zM204 274h4v1h-4zM1404 274h2v1h-2zM200 275h4v1h-4zM1406 275h2v1h-2zM196 276h4v1h-4zM1408 276h3v1h-3zM192 277h4v1h-4zM1411 277h2v1h-2zM188 278h4v1h-4zM1413 278h2v1h-2zM14 279h6v1h-6zM184 279h4v1h-4zM1415 279h2v1h-2zM20 280h11v1h-11zM179 280h5v1h-5zM1417 280h2v1h-2zM31 281h11v1h-11zM173 281h6v1h-6zM1419 281h2v1h-2zM42 282h11v1h-11zM167 282h6v1h-6zM1421 282h2v1h-2zM53 283h11v1h-11zM162 283h5v1h-5zM1423 283h2v1h-2zM64 284h12v1h-12zM156 284h6v1h-6zM1425 284h2v1h-2zM76 285h9v1h-9zM150 285h6v1h-6zM1427 285h2v1h-2zM85 286h6v1h-6zM143 286h7v1h-7zM1429 286h2v1h-2zM91 287h7v1h-7zM135 287h8v1h-8zM1431 287h2v1h-2zM98 288h7v1h-7zM127 288h8v1h-8zM1433 288h2v1h-2zM105 289h6v1h-6zM119 289h8v1h-8zM1435 289h2v1h-2zM111 290h8v1h-8zM1437 290h2v1h-2zM1439 291h2v1h-2zM1441 292h2v1h-2zM1443 293h2v1h-2zM1445 294h2v1h-2zM1447 295h1v1h-1zM1448 296h2v1h-2zM1450 297h2v1h-2zM1452 298h1v1h-1zM1453 299h2v1h-2zM1455 300h2v1h-2zM1457 301h1v1h-1zM1458 302h2v1h-2zM1460 303h2v1h-2zM1462 304h1v1h-1zM1463 305h2v1h-2zM1465 306h1v1h-1zM1466 307h2v1h-2zM1468 308h2v1h-2zM1470 309h1v1h-1zM1471 310h2v1h-2zM1473 311h2v1h-2zM1475 312h1v1h-1zM1476 313h2v1h-2zM1478 314h2v1h-2zM1480 315h1v1h-1zM1481 316h2v1h-2zM1483 317h2v1h-2zM1485 318h2v1h-2zM1487 319h2v1h-2zM1489 320h2v1h-2zM1491 321h2v1h-2zM1493 322h2v1h-2zM1495 323h2v1h-2zM1497 324h1v1h-1zM1498 325h2v1h-2zM1500 326h2v1h-2zM1502 327h2v1h-2zM1504 328h2v1h-2zM1506 329h2v1h-2zM1508 330h2v1h-2zM1510 331h2v1h-2zM1512 332h2v1h-2z" fill="#ffff00"/>
<path d="M14 139h5v1h-5zM19 140h8v1h-8zM27 141h8v1h-8zM35 142h8v1h-8zM43 143h7v1h-7zM50 144h6v1h-6zM56 145h6v1h-6zM62 146h5v1h-5zM67 147h6v1h-6zM73 148h6v1h-6zM79 149h7v1h-7zM86 150h8v1h-8zM94 151h8v1h-8zM102 152h8v1h-8zM110 153h7v1h-7zM117 154h6v1h-6zM123 155h5v1h-5zM128 156h6v1h-6zM134 157h5v1h-5zM139 158h6v1h-6zM145 159h6v1h-6zM151 160h7v1h-7zM158 161h6v1h-6zM164 162h7v1h-7zM171 163h7v1h-7zM178 164h9v1h-9zM187 165h11v1h-11zM198 166h11v1h-11zM209 167h14v1h-14zM223 168h16v1h-16zM239 169h17v1h-17zM256 170h17v1h-17zM273 171h17v1h-17zM290 172h16v1h-16zM306 173h17v1h-17zM323 174h16v1h-16zM339 175h25v1h-25zM364 176h26v1h-26zM390 177h16v1h-16zM406 178h12v1h-12zM418 179h6v1h-6zM424 180h7v1h-7zM431 181h7v1h-7zM438 182h6v1h-6zM444 183h8v1h-8zM452 184h8v1h-8zM460 185h9v1h-9zM469 186h8v1h-8zM477 187h13v1h-13zM490 188h16v1h-16zM506 189h17v1h-17zM523 190h16v1h-16zM539 191h25v1h-25zM564 192h34v1h-34zM598 193h22v1h-22zM620 194h11v1h-11zM631 195h11v1h-11zM642 196h9v1h-9zM651 197h7v1h-7zM658 198h6v1h-6zM664 199h7v1h-7zM671 200h7v1h-7zM678 201h8v1h-8zM686 202h8v1h-8zM694 203h8v1h-8zM702 204h8v1h-8zM710 205h10v1h-10zM720 206h11v1h-11zM731 207h11v1h-11zM742 208h11v1h-11zM753 209h11v1h-11zM764 210h12v1h-12zM776 211h22v1h-22zM798 212h22v1h-22zM820 213h11v1h-11zM831 214h11v1h-11zM842 215h22v1h-22zM864 216h25v1h-25zM889 217h17v1h-17zM906 218h14v1h-14zM920 219h11v1h-11zM931 220h11v1h-11zM942 221h22v1h-22zM964 222h25v1h-25zM989 223h17v1h-17zM1006 224h17v1h-17zM1023 225h16v1h-16zM1039 226h25v1h-25zM1064 227h25v1h-25zM1089 228h17v1h-17zM1106 229h17v1h-17zM1123 230h16v1h-16zM1139 231h17v1h-17zM1156 232h16v1h-16zM1172 233h17v1h-17zM1189 234h17v1h-17zM1206 235h25v1h-25zM1231 236h25v1h-25zM1256 237h16v1h-16zM1272 238h14v1h-14zM1286 239h11v1h-11zM1297 240h12v1h-12zM1309 241h14v1h-14zM1323 242h16v1h-16zM1339 243h14v1h-14zM1353 244h11v1h-11zM1364 245h11v1h-11zM1375 246h10v1h-10zM1385 247h8v1h-8zM1393 248h9v1h-9zM1402 249h8v1h-8zM1410 250h9v1h-9zM1419 251h8v1h-8zM1427 252h8v1h-8zM1435 253h8v1h-8zM1443 254h9v1h-9zM1452 255h8v1h-8zM1460 256h8v1h-8zM1468 257h8v1h-8zM1476 258h9v1h-9zM1485 259h8v1h-8zM1493 260h9v1h-9zM1502 261h8v1h-8zM1510 262h4v1h-4z" fill="#0000ff"/>
<rect x="782" y="44" width="3" height="1" fill="#e6e6e6"/>
<rect x="781" y="45" width="1" height="3" fill="#e6e6e6"/>
<rect x="782" y="48" width="1" height="1" fill="#e6e6e6"/>
<rect x="783" y="49" width="1" height="1" fill="#e6e6e6"/>
<rect x="784" y="46" width="2" height="1" fill="#e6e6e6"/>
<rect x="786" y="47" width="2" height="1" fill="#e6e6e6"/>
<rect x="788" y="48" width="2" height="1" fill="#e6e6e6"/>
<rect x="790" y="49" width="3" height="1" fill="#e6e6e6"/>
<rect x="1514" y="540" width="1" height="2" fill="#e6e6e6"/>
<rect x="1516" y="539" width="2" height="1" fill="#e6e6e6"/>
<rect x="1515" y="541" width="11" height="1" fill="#e6e6e6"/>
<rect x="1516" y="543" width="1" height="1" fill="#e6e6e6"/>
<rect x="1517" y="544" width="1" height="1" fill="#e6e6e6"/>
<path d="M447 585h1v1h-1zM1480 585h34v1h-34zM447 586h1v1h-1zM1480 586h1v1h-1zM447 587h1v1h-1zM1480 587h1v1h-1zM447 588h1v1h-1zM1480 588h1v1h-1zM447 589h1v1h-1zM1480 589h1v1h-1zM446 590h1v1h-1zM448 590h1v1h-1zM1479 590h1v1h-1zM446 591h1v1h-1zM448 591h1v1h-1zM1479 591h1v1h-1zM446 592h1v1h-1zM448 592h1v1h-1zM1479 592h1v1h-1zM446 593h1v1h-1zM448 593h1v1h-1zM1479 593h1v1h-1zM446 594h1v1h-1zM448 594h1v1h-1zM1479 594h1v1h-1zM446 595h1v1h-1zM448 595h1v1h-1zM1479 595h1v1h-1zM446 596h1v1h-1zM448 596h1v1h-1zM1479 596h1v1h-1zM446 597h1v1h-1zM448 597h1v1h-1zM1479 597h1v1h-1zM446 598h1v1h-1zM448 598h1v1h-1zM1479 598h1v1h-1zM446 599h1v1h-1zM449 599h1v1h-1zM1479 599h1v1h-1zM445 600h1v1h-1zM449 600h1v1h-1zM1478 600h1v1h-1zM445 601h1v1h-1zM449 601h1v1h-1zM1478 601h1v1h-1zM445 602h1v1h-1zM449 602h1v1h-1zM1478 602h1v1h-1zM445 603h1v1h-1zM449 603h1v1h-1zM1478 603h1v1h-1zM445 604h1v1h-1zM449 604h1v1h-1zM1478 604h1v1h-1zM445 605h1v1h-1zM449 605h1v1h-1zM1478 605h1v1h-1zM445 606h1v1h-1zM449 606h1v1h-1zM1478 606h1v1h-1zM445 607h1v1h-1zM449 607h1v1h-1zM1478 607h1v1h-1zM445 608h1v1h-1zM449 608h1v1h-1zM1478 608h1v1h-1zM444 609h1v1h-1zM450 609h1v1h-1zM1477 609h1v1h-1zM444 610h1v1h-1zM450 610h1v1h-1zM1477 610h1v1h-1zM444 611h1v1h-1zM450 611h1v1h-1zM1477 611h1v1h-1zM444 612h1v1h-1zM450 612h1v1h-1zM1477 612h1v1h-1zM444 613h1v1h-1zM450 613h1v1h-1zM1477 613h1v1h-1zM444 614h1v1h-1zM450 614h1v1h-1zM1477 614h1v1h-1zM444 615h1v1h-1zM450 615h1v1h-1zM1477 615h1v1h-1zM444 616h1v1h-1zM450 616h1v1h-1zM1477 616h1v1h-1zM444 617h1v1h-1zM450 617h1v1h-1zM1477 617h1v1h-1zM444 618h1v1h-1zM451 618h1v1h-1zM1477 618h1v1h-1zM443 619h1v1h-1zM451 619h1v1h-1zM1476 619h1v1h-1zM443 620h1v1h-1zM451 620h1v1h-1zM1476 620h1v1h-1zM443 621h1v1h-1zM451 621h1v1h-1zM1476 621h1v1h-1zM443 622h1v1h-1zM451 622h1v1h-1zM1476 622h1v1h-1zM443 623h1v1h-1zM451 623h1v1h-1zM1476 623h1v1h-1zM443 624h1v1h-1zM451 624h1v1h-1zM1476 624h1v1h-1zM443 625h1v1h-1zM451 625h1v1h-1zM1476 625h1v1h-1zM443 626h1v1h-1zM451 626h1v1h-1zM1476 626h1v1h-1zM443 627h1v1h-1zM452 627h1v1h-1zM1476 627h1v1h-1zM442 628h1v1h-1zM452 628h1v1h-1zM1475 628h1v1h-1zM442 629h1v1h-1zM452 629h1v1h-1zM1475 629h1v1h-1zM442 630h1v1h-1zM452 630h1v1h-1zM1475 630h1v1h-1zM442 631h1v1h-1zM452 631h1v1h-1zM1475 631h1v1h-1zM442 632h1v1h-1zM452 632h1v1h-1zM1475 632h1v1h-1zM442 633h1v1h-1zM452 633h1v1h-1zM1475 633h1v1h-1zM442 634h1v1h-1zM452 634h1v1h-1zM1475 634h1v1h-1zM442 635h1v1h-1zM452 635h1v1h-1zM1475 635h1v1h-1zM442 636h1v1h-1zM453 636h1v1h-1zM1475 636h1v1h-1zM442 637h1v1h-1zM453 637h1v1h-1zM1475 637h1v1h-1zM441 638h1v1h-1zM453 638h1v1h-1zM1474 638h1v1h-1zM441 639h1v1h-1zM453 639h1v1h-1zM1474 639h1v1h-1zM441 640h1v1h-1zM453 640h1v1h-1zM1474 640h1v1h-1zM441 641h1v1h-1zM453 641h1v1h-1zM1474 641h1v1h-1zM441 642h1v1h-1zM453 642h1v1h-1zM1474 642h1v1h-1zM441 643h1v1h-1zM453 643h1v1h-1zM1474 643h1v1h-1zM441 644h1v1h-1zM453 644h1v1h-1zM1474 644h1v1h-1zM441 645h1v1h-1zM454 645h1v1h-1zM1474 645h1v1h-1zM441 646h1v1h-1zM454 646h1v1h-1zM1474 646h1v1h-1zM440 647h1v1h-1zM454 647h1v1h-1zM1473 647h1v1h-1zM440 648h1v1h-1zM454 648h1v1h-1zM1473 648h1v1h-1zM440 649h1v1h-1zM454 649h1v1h-1zM1473 649h1v1h-1zM440 650h1v1h-1zM454 650h1v1h-1zM1473 650h1v1h-1zM440 651h1v1h-1zM454 651h1v1h-1zM1473 651h1v1h-1zM440 652h1v1h-1zM454 652h1v1h-1zM1473 652h1v1h-1zM440 653h1v1h-1zM454 653h1v1h-1zM1473 653h1v1h-1zM440 654h1v1h-1zM454 654h1v1h-1zM1473 654h1v1h-1zM440 655h1v1h-1zM455 655h1v1h-1zM1473 655h1v1h-1zM440 656h1v1h-1zM455 656h1v1h-1zM1473 656h1v1h-1zM439 657h1v1h-1zM455 657h1v1h-1zM1472 657h1v1h-1zM439 658h1v1h-1zM455 658h1v1h-1zM1472 658h1v1h-1zM439 659h1v1h-1zM455 659h1v1h-1zM1472 659h1v1h-1zM439 660h1v1h-1zM455 660h1v1h-1zM1472 660h1v1h-1zM439 661h1v1h-1zM455 661h1v1h-1zM1472 661h1v1h-1zM439 662h1v1h-1zM455 662h1v1h-1zM1472 662h1v1h-1zM439 663h1v1h-1zM455 663h1v1h-1zM1472 663h1v1h-1zM439 664h1v1h-1zM456 664h1v1h-1zM1472 664h1v1h-1zM439 665h1v1h-1zM456 665h1v1h-1zM1472 665h1v1h-1zM438 666h1v1h-1zM456 666h1v1h-1zM1471 666h1v1h-1zM438 667h1v1h-1zM456 667h1v1h-1zM1471 667h1v1h-1zM438 668h1v1h-1zM456 668h1v1h-1zM1471 668h1v1h-1zM438 669h1v1h-1zM456 669h1v1h-1zM1471 669h1v1h-1zM438 670h1v1h-1zM456 670h1v1h-1zM1471 670h1v1h-1zM438 671h1v1h-1zM456 671h1v1h-1zM1471 671h1v1h-1zM438 672h1v1h-1zM456 672h1v1h-1zM1471 672h1v1h-1zM438 673h1v1h-1zM457 673h1v1h-1zM1471 673h1v1h-1zM438 674h1v1h-1zM457 674h1v1h-1zM1471 674h1v1h-1zM438 675h1v1h-1zM457 675h1v1h-1zM1471 675h1v1h-1zM437 676h1v1h-1zM457 676h1v1h-1zM1470 676h1v1h-1zM437 677h1v1h-1zM457 677h1v1h-1zM1470 677h1v1h-1zM437 678h1v1h-1zM457 678h1v1h-1zM1470 678h1v1h-1zM437 679h1v1h-1zM457 679h1v1h-1zM1470 679h1v1h-1zM437 680h1v1h-1zM457 680h1v1h-1zM1470 680h1v1h-1zM437 681h1v1h-1zM457 681h1v1h-1zM1470 681h1v1h-1zM437 682h1v1h-1zM458 682h1v1h-1zM1470 682h1v1h-1zM437 683h1v1h-1zM458 683h1v1h-1zM1470 683h1v1h-1zM437 684h1v1h-1zM458 684h1v1h-1zM1470 684h1v1h-1zM436 685h1v1h-1zM458 685h1v1h-1zM1469 685h1v1h-1zM436 686h1v1h-1zM458 686h1v1h-1zM1469 686h1v1h-1zM436 687h1v1h-1zM458 687h1v1h-1zM1469 687h1v1h-1zM436 688h1v1h-1zM458 688h1v1h-1zM1469 688h1v1h-1zM436 689h1v1h-1zM458 689h1v1h-1zM1469 689h1v1h-1zM436 690h1v1h-1zM458 690h1v1h-1zM1469 690h1v1h-1zM436 691h1v1h-1zM459 691h1v1h-1zM1469 691h1v1h-1zM436 692h1v1h-1zM459 692h1v1h-1zM1469 692h1v1h-1zM436 693h1v1h-1zM459 693h1v1h-1zM1469 693h1v1h-1zM436 694h1v1h-1zM459 694h1v1h-1zM1469 694h1v1h-1zM435 695h1v1h-1zM459 695h1v1h-1zM1468 695h1v1h-1zM435 696h1v1h-1zM459 696h1v1h-1zM1468 696h1v1h-1zM435 697h1v1h-1zM459 697h1v1h-1zM1468 697h1v1h-1zM435 698h1v1h-1zM459 698h1v1h-1zM1468 698h1v1h-1zM435 699h1v1h-1zM459 699h1v1h-1zM1468 699h1v1h-1zM435 700h1v1h-1zM459 700h1v1h-1zM1468 700h1v1h-1zM435 701h1v1h-1zM460 701h1v1h-1zM1468 701h1v1h-1zM435 702h1v1h-1zM460 702h1v1h-1zM1468 702h1v1h-1zM435 703h1v1h-1zM460 703h1v1h-1zM1468 703h1v1h-1zM434 704h1v1h-1zM460 704h1v1h-1zM1467 704h1v1h-1zM434 705h1v1h-1zM460 705h1v1h-1zM1467 705h1v1h-1zM434 706h1v1h-1zM460 706h1v1h-1zM1467 706h1v1h-1zM434 707h1v1h-1zM460 707h1v1h-1zM1467 707h1v1h-1zM434 708h1v1h-1zM460 708h1v1h-1zM1467 708h1v1h-1zM434 709h1v1h-1zM460 709h1v1h-1zM1467 709h1v1h-1zM434 710h1v1h-1zM461 710h1v1h-1zM1467 710h1v1h-1zM434 711h1v1h-1zM461 711h1v1h-1zM1467 711h1v1h-1zM434 712h1v1h-1zM461 712h1v1h-1zM1467 712h1v1h-1zM434 713h1v1h-1zM461 713h1v1h-1zM1467 713h1v1h-1zM433 714h1v1h-1zM461 714h1v1h-1zM1466 714h1v1h-1zM433 715h1v1h-1zM461 715h1v1h-1zM1466 715h1v1h-1zM433 716h1v1h-1zM461 716h1v1h-1zM1466 716h1v1h-1zM433 717h1v1h-1zM461 717h1v1h-1zM1466 717h1v1h-1zM433 718h1v1h-1zM461 718h1v1h-1zM1466 718h1v1h-1zM433 719h1v1h-1zM462 719h1v1h-1zM1466 719h1v1h-1zM433 720h1v1h-1zM462 720h1v1h-1zM1466 720h1v1h-1zM433 721h1v1h-1zM462 721h1v1h-1zM1466 721h1v1h-1zM433 722h1v1h-1zM462 722h1v1h-1zM1466 722h1v1h-1zM432 723h1v1h-1zM462 723h1v1h-1zM1465 723h1v1h-1zM432 724h1v1h-1zM462 724h1v1h-1zM1465 724h1v1h-1zM432 725h1v1h-1zM462 725h1v1h-1zM1465 725h1v1h-1zM432 726h1v1h-1zM462 726h1v1h-1zM1465 726h1v1h-1zM432 727h1v1h-1zM462 727h1v1h-1zM1465 727h1v1h-1zM432 728h1v1h-1zM463 728h1v1h-1zM1465 728h1v1h-1zM432 729h1v1h-1zM463 729h1v1h-1zM1465 729h1v1h-1zM432 730h1v1h-1zM463 730h1v1h-1zM1465 730h1v1h-1zM432 731h1v1h-1zM463 731h1v1h-1zM1465 731h1v1h-1zM432 732h1v1h-1zM463 732h1v1h-1zM1465 732h1v1h-1zM431 733h1v1h-1zM463 733h1v1h-1zM1464 733h1v1h-1zM431 734h1v1h-1zM463 734h1v1h-1zM1464 734h1v1h-1zM431 735h1v1h-1zM463 735h1v1h-1zM1464 735h1v1h-1zM431 736h1v1h-1zM463 736h1v1h-1zM1464 736h1v1h-1zM431 737h1v1h-1zM464 737h1v1h-1zM1464 737h1v1h-1zM431 738h1v1h-1zM464 738h1v1h-1zM1464 738h1v1h-1zM431 739h1v1h-1zM464 739h1v1h-1zM1464 739h1v1h-1zM431 740h1v1h-1zM464 740h1v1h-1zM1464 740h1v1h-1zM431 741h1v1h-1zM464 741h1v1h-1zM1464 741h1v1h-1zM430 742h1v1h-1zM464 742h1v1h-1zM1463 742h1v1h-1zM430 743h1v1h-1zM464 743h1v1h-1zM1463 743h1v1h-1zM430 744h1v1h-1zM464 744h1v1h-1zM1463 744h1v1h-1zM430 745h1v1h-1zM464 745h1v1h-1zM1463 745h1v1h-1zM430 746h1v1h-1zM464 746h1v1h-1zM1463 746h1v1h-1zM430 747h1v1h-1zM465 747h1v1h-1zM1463 747h1v1h-1zM430 748h1v1h-1zM465 748h1v1h-1zM1463 748h1v1h-1zM430 749h1v1h-1zM465 749h1v1h-1zM1463 749h1v1h-1zM430 750h1v1h-1zM465 750h1v1h-1zM1463 750h1v1h-1zM429 751h1v1h-1zM465 751h1v1h-1zM1462 751h1v1h-1zM429 752h1v1h-1zM465 752h1v1h-1zM1462 752h1v1h-1zM429 753h1v1h-1zM465 753h1v1h-1zM1462 753h1v1h-1zM429 754h1v1h-1zM465 754h1v1h-1zM1462 754h1v1h-1zM429 755h1v1h-1zM465 755h1v1h-1zM1462 755h1v1h-1zM429 756h1v1h-1zM466 756h1v1h-1zM1462 756h1v1h-1zM429 757h1v1h-1zM466 757h1v1h-1zM1462 757h1v1h-1zM429 758h1v1h-1zM466 758h1v1h-1zM1462 758h1v1h-1zM429 759h1v1h-1zM466 759h1v1h-1zM1462 759h1v1h-1zM429 760h1v1h-1zM466 760h1v1h-1zM1462 760h1v1h-1zM428 761h1v1h-1zM466 761h1v1h-1zM1461 761h1v1h-1zM428 762h1v1h-1zM466 762h1v1h-1zM1461 762h1v1h-1zM428 763h1v1h-1zM466 763h1v1h-1zM1461 763h1v1h-1zM428 764h1v1h-1zM466 764h1v1h-1zM1461 764h1v1h-1zM428 765h1v1h-1zM467 765h1v1h-1zM1461 765h1v1h-1zM428 766h1v1h-1zM467 766h1v1h-1zM1461 766h1v1h-1zM428 767h1v1h-1zM467 767h1v1h-1zM1461 767h1v1h-1zM428 768h1v1h-1zM467 768h1v1h-1zM1461 768h1v1h-1zM428 769h1v1h-1zM467 769h1v1h-1zM1461 769h1v1h-1zM427 770h1v1h-1zM467 770h1v1h-1zM1460 770h1v1h-1zM427 771h1v1h-1zM467 771h1v1h-1zM1460 771h1v1h-1zM427 772h1v1h-1zM467 772h1v1h-1zM1460 772h1v1h-1zM427 773h1v1h-1zM467 773h1v1h-1zM1460 773h1v1h-1zM427 774h1v1h-1zM468 774h1v1h-1zM1460 774h1v1h-1zM427 775h1v1h-1zM468 775h1v1h-1zM1460 775h1v1h-1zM427 776h1v1h-1zM468 776h1v1h-1zM1460 776h1v1h-1zM427 777h1v1h-1zM468 777h1v1h-1zM1460 777h1v1h-1zM427 778h1v1h-1zM468 778h1v1h-1zM1460 778h1v1h-1zM427 779h1v1h-1zM468 779h1v1h-1zM1460 779h1v1h-1zM426 780h1v1h-1zM468 780h1v1h-1zM1459 780h1v1h-1zM426 781h1v1h-1zM468 781h1v1h-1zM1459 781h1v1h-1zM426 782h1v1h-1zM468 782h1v1h-1zM1459 782h1v1h-1zM426 783h1v1h-1zM469 783h1v1h-1zM1459 783h1v1h-1zM426 784h1v1h-1zM469 784h1v1h-1zM1459 784h1v1h-1zM426 785h1v1h-1zM469 785h1v1h-1zM1459 785h1v1h-1zM426 786h1v1h-1zM469 786h1v1h-1zM1459 786h1v1h-1zM426 787h1v1h-1zM469 787h1v1h-1zM1459 787h1v1h-1zM426 788h1v1h-1zM469 788h1v1h-1zM1459 788h1v1h-1zM425 789h1v1h-1zM469 789h1v1h-1zM1458 789h1v1h-1zM425 790h1v1h-1zM469 790h1v1h-1zM1458 790h1v1h-1zM425 791h1v1h-1zM469 791h1v1h-1zM1458 791h1v1h-1zM425 792h1v1h-1zM469 792h1v1h-1zM1458 792h1v1h-1zM425 793h1v1h-1zM470 793h1v1h-1zM1458 793h1v1h-1zM425 794h1v1h-1zM470 794h1v1h-1zM1458 794h1v1h-1zM425 795h1v1h-1zM470 795h1v1h-1zM1458 795h1v1h-1zM425 796h1v1h-1zM470 796h1v1h-1zM1458 796h1v1h-1zM425 797h1v1h-1zM470 797h1v1h-1zM1458 797h1v1h-1zM425 798h1v1h-1zM470 798h1v1h-1zM1458 798h1v1h-1zM424 799h1v1h-1zM470 799h1v1h-1zM1457 799h1v1h-1zM424 800h1v1h-1zM470 800h1v1h-1zM1457 800h1v1h-1zM424 801h1v1h-1zM470 801h1v1h-1zM1457 801h1v1h-1zM424 802h1v1h-1zM471 802h1v1h-1zM1457 802h1v1h-1zM424 803h1v1h-1zM471 803h1v1h-1zM1457 803h1v1h-1zM424 804h1v1h-1zM471 804h1v1h-1zM1457 804h1v1h-1zM424 805h1v1h-1zM471 805h1v1h-1zM1457 805h1v1h-1zM424 806h1v1h-1zM471 806h1v1h-1zM1457 806h1v1h-1zM424 807h1v1h-1zM471 807h1v1h-1zM1457 807h1v1h-1zM423 808h1v1h-1zM471 808h1v1h-1zM1456 808h1v1h-1zM423 809h1v1h-1zM471 809h1v1h-1zM1456 809h1v1h-1zM423 810h1v1h-1zM471 810h1v1h-1zM1456 810h1v1h-1zM423 811h1v1h-1zM472 811h1v1h-1zM1456 811h1v1h-1zM423 812h1v1h-1zM472 812h1v1h-1zM1456 812h1v1h-1zM423 813h1v1h-1zM472 813h1v1h-1zM1456 813h1v1h-1zM423 814h1v1h-1zM472 814h1v1h-1zM1456 814h1v1h-1zM423 815h1v1h-1zM472 815h1v1h-1zM1456 815h1v1h-1zM423 816h1v1h-1zM472 816h1v1h-1zM1456 816h1v1h-1zM423 817h1v1h-1zM472 817h1v1h-1zM1456 817h1v1h-1zM422 818h1v1h-1zM472 818h1v1h-1zM1455 818h1v1h-1zM422 819h1v1h-1zM472 819h1v1h-1zM1455 819h1v1h-1zM422 820h1v1h-1zM473 820h1v1h-1zM1455 820h1v1h-1zM422 821h1v1h-1zM473 821h1v1h-1zM1455 821h1v1h-1zM422 822h1v1h-1zM473 822h1v1h-1zM1455 822h1v1h-1zM422 823h1v1h-1zM473 823h1v1h-1zM1455 823h1v1h-1zM422 824h1v1h-1zM473 824h1v1h-1zM1455 824h1v1h-1zM422 825h1v1h-1zM473 825h1v1h-1zM1455 825h1v1h-1zM422 826h1v1h-1zM473 826h1v1h-1zM1455 826h1v1h-1zM421 827h1v1h-1zM473 827h1v1h-1zM1454 827h1v1h-1zM421 828h1v1h-1zM473 828h1v1h-1zM1454 828h1v1h-1zM421 829h1v1h-1zM474 829h1v1h-1zM1454 829h1v1h-1zM421 830h1v1h-1zM474 830h1v1h-1zM1454 830h1v1h-1zM421 831h1v1h-1zM474 831h1v1h-1zM1454 831h1v1h-1zM421 832h1v1h-1zM474 832h1v1h-1zM1454 832h1v1h-1zM421 833h1v1h-1zM474 833h1v1h-1zM1454 833h1v1h-1zM421 834h1v1h-1zM474 834h1v1h-1zM1454 834h1v1h-1zM421 835h1v1h-1zM474 835h1v1h-1zM1454 835h1v1h-1zM421 836h1v1h-1zM474 836h1v1h-1zM1454 836h1v1h-1zM420 837h1v1h-1zM474 837h1v1h-1zM1453 837h1v1h-1zM420 838h1v1h-1zM474 838h1v1h-1zM1453 838h1v1h-1zM420 839h1v1h-1zM475 839h1v1h-1zM1453 839h1v1h-1zM420 840h1v1h-1zM475 840h1v1h-1zM1453 840h1v1h-1zM420 841h1v1h-1zM475 841h1v1h-1zM1453 841h1v1h-1zM420 842h1v1h-1zM475 842h1v1h-1zM1453 842h1v1h-1zM420 843h1v1h-1zM475 843h1v1h-1zM1453 843h1v1h-1zM420 844h1v1h-1zM475 844h1v1h-1zM1453 844h1v1h-1zM420 845h1v1h-1zM475 845h1v1h-1zM1453 845h1v1h-1zM419 846h1v1h-1zM475 846h1v1h-1zM1452 846h1v1h-1zM419 847h1v1h-1zM475 847h1v1h-1zM1452 847h1v1h-1zM419 848h1v1h-1zM476 848h1v1h-1zM1452 848h1v1h-1zM419 849h1v1h-1zM476 849h1v1h-1zM1452 849h1v1h-1zM419 850h1v1h-1zM476 850h1v1h-1zM1452 850h1v1h-1zM419 851h1v1h-1zM476 851h1v1h-1zM1452 851h1v1h-1zM419 852h1v1h-1zM476 852h1v1h-1zM1452 852h1v1h-1zM419 853h1v1h-1zM476 853h1v1h-1zM1452 853h1v1h-1zM419 854h1v1h-1zM476 854h1v1h-1zM1452 854h1v1h-1zM419 855h1v1h-1zM476 855h1v1h-1zM1452 855h1v1h-1zM418 856h1v1h-1zM476 856h1v1h-1zM1451 856h1v1h-1zM418 857h1v1h-1zM477 857h1v1h-1zM1451 857h1v1h-1zM418 858h1v1h-1zM477 858h1v1h-1zM1451 858h1v1h-1zM418 859h1v1h-1zM477 859h1v1h-1zM1451 859h1v1h-1zM418 860h1v1h-1zM477 860h1v1h-1zM1451 860h1v1h-1zM418 861h1v1h-1zM477 861h1v1h-1zM1451 861h1v1h-1zM418 862h1v1h-1zM477 862h1v1h-1zM1451 862h1v1h-1zM418 863h1v1h-1zM477 863h1v1h-1zM1451 863h1v1h-1zM418 864h1v1h-1zM477 864h1v1h-1zM1451 864h1v1h-1zM417 865h1v1h-1zM477 865h1v1h-1zM1450 865h1v1h-1zM417 866h1v1h-1zM478 866h1v1h-1zM1450 866h1v1h-1zM417 867h1v1h-1zM478 867h1v1h-1zM1450 867h1v1h-1zM417 868h1v1h-1zM478 868h1v1h-1zM1450 868h1v1h-1zM417 869h1v1h-1zM478 869h1v1h-1zM1450 869h1v1h-1zM417 870h1v1h-1zM478 870h1v1h-1zM1450 870h1v1h-1zM417 871h1v1h-1zM478 871h1v1h-1zM1450 871h1v1h-1zM417 872h1v1h-1zM478 872h1v1h-1zM1450 872h1v1h-1zM417 873h1v1h-1zM478 873h1v1h-1zM1450 873h1v1h-1zM417 874h1v1h-1zM478 874h1v1h-1zM1450 874h1v1h-1zM416 875h1v1h-1zM479 875h1v1h-1zM1449 875h1v1h-1zM416 876h1v1h-1zM479 876h1v1h-1zM1449 876h1v1h-1zM416 877h1v1h-1zM479 877h1v1h-1zM1449 877h1v1h-1zM416 878h1v1h-1zM479 878h1v1h-1zM1449 878h1v1h-1zM416 879h1v1h-1zM479 879h1v1h-1zM1449 879h1v1h-1zM416 880h1v1h-1zM479 880h1v1h-1zM1449 880h1v1h-1zM416 881h1v1h-1zM479 881h1v1h-1zM1449 881h1v1h-1zM416 882h1v1h-1zM479 882h1v1h-1zM1449 882h1v1h-1zM416 883h1v1h-1zM479 883h1v1h-1zM1449 883h1v1h-1zM415 884h1v1h-1zM479 884h1v1h-1zM1448 884h1v1h-1zM415 885h1v1h-1zM480 885h1v1h-1zM1448 885h1v1h-1zM415 886h1v1h-1zM480 886h1v1h-1zM1448 886h1v1h-1zM415 887h1v1h-1zM480 887h1v1h-1zM1448 887h1v1h-1zM415 888h1v1h-1zM480 888h1v1h-1zM1448 888h1v1h-1zM415 889h1v1h-1zM480 889h1v1h-1zM1448 889h1v1h-1zM415 890h1v1h-1zM480 890h1v1h-1zM1448 890h1v1h-1zM415 891h1v1h-1zM480 891h1v1h-1zM1448 891h1v1h-1zM415 892h1v1h-1zM480 892h1v1h-1zM1448 892h1v1h-1zM415 893h1v1h-1zM480 893h1v1h-1zM1448 893h1v1h-1zM414 894h1v1h-1zM481 894h1v1h-1zM1447 894h1v1h-1zM414 895h1v1h-1zM481 895h1v1h-1zM1447 895h1v1h-1zM414 896h1v1h-1zM481 896h1v1h-1zM1447 896h1v1h-1zM414 897h1v1h-1zM481 897h1v1h-1zM1447 897h1v1h-1zM14 898h401v1h-401zM481 898h967v1h-967z" fill="#ffffff"/>
<rect x="45" y="896" width="5" height="4" fill="#ffffff"/>
<rect x="112" y="896" width="5" height="4" fill="#ffffff"/>
<rect x="179" y="896" width="5" height="4" fill="#ffffff"/>
<rect x="245" y="896" width="5" height="4" fill="#ffffff"/>
<rect x="312" y="896" width="5" height="4" fill="#ffffff"/>
<rect x="379" y="896" width="5" height="4" fill="#ffffff"/>
<rect x="445" y="585" width="5" height="2" fill="#ffffff"/>
<rect x="512" y="896" width="5" height="4" fill="#ffffff"/>
<rect x="579" y="896" width="5" height="4" fill="#ffffff"/>
<rect x="645" y="896" width="5" height="4" fill="#ffffff"/>
<rect x="712" y="896" width="5" height="4" fill="#ffffff"/>
<rect x="779" y="896" width="5" height="4" fill="#ffffff"/>
<rect x="845" y="896" width="5" height="4" fill="#ffffff"/>
<rect x="912" y="896" width="5" height="4" fill="#ffffff"/>
<rect x="978" y="896" width="5" height="4" fill="#ffffff"/>
<rect x="1045" y="896" width="5" height="4" fill="#ffffff"/>
<rect x="1112" y="896" width="5" height="4" fill="#ffffff"/>
<rect x="1178" y="896" width="5" height="4" fill="#ffffff"/>
<rect x="1245" y="896" width="5" height="4" fill="#ffffff"/>
<rect x="1312" y="896" width="5" height="4" fill="#ffffff"/>
<rect x="1378" y="896" width="5" height="4" fill="#ffffff"/>
<rect x="1445" y="896" width="5" height="4" fill="#ffffff"/>
<rect x="1512" y="585" width="5" height="2" fill="#ffffff"/>
<rect x="1512" y="585" width="5" height="2" fill="#ffffff"/>
</svg>
<svg width="1688" height="923" style="pointer-events:none"><g font-family="Liberation Sans" font-size="24" fill="rgba(128,128,128,0.27)">
<text x="49" y="159" transform="rotate(-44.5 49 159)" text-anchor="middle" dominant-baseline="middle">www.cfchi.com</text>
<text x="335" y="159" transform="rotate(-44.5 335 159)" text-anchor="middle" dominant-baseline="middle">www.cfchi.com</text>
<text x="621" y="159" transform="rotate(-44.5 621 159)" text-anchor="middle" dominant-baseline="middle">www.cfchi.com</text>
<text x="907" y="159" transform="rotate(-44.5 907 159)" text-anchor="middle" dominant-baseline="middle">www.cfchi.com</text>
<text x="1193" y="159" transform="rotate(-44.5 1193 159)" text-anchor="middle" dominant-baseline="middle">www.cfchi.com</text>
<text x="1479" y="159" transform="rotate(-44.5 1479 159)" text-anchor="middle" dominant-baseline="middle">www.cfchi.com</text>
<text x="49" y="378" transform="rotate(-44.5 49 378)" text-anchor="middle" dominant-baseline="middle">www.cfchi.com</text>
<text x="335" y="378" transform="rotate(-44.5 335 378)" text-anchor="middle" dominant-baseline="middle">www.cfchi.com</text>
<text x="621" y="378" transform="rotate(-44.5 621 378)" text-anchor="middle" dominant-baseline="middle">www.cfchi.com</text>
<text x="907" y="378" transform="rotate(-44.5 907 378)" text-anchor="middle" dominant-baseline="middle">www.cfchi.com</text>
<text x="1193" y="378" transform="rotate(-44.5 1193 378)" text-anchor="middle" dominant-baseline="middle">www.cfchi.com</text>
<text x="1479" y="378" transform="rotate(-44.5 1479 378)" text-anchor="middle" dominant-baseline="middle">www.cfchi.com</text>
<text x="49" y="597" transform="rotate(-44.5 49 597)" text-anchor="middle" dominant-baseline="middle">www.cfchi.com</text>
<text x="335" y="597" transform="rotate(-44.5 335 597)" text-anchor="middle" dominant-baseline="middle">www.cfchi.com</text>
<text x="621" y="597" transform="rotate(-44.5 621 597)" text-anchor="middle" dominant-baseline="middle">www.cfchi.com</text>
<text x="907" y="597" transform="rotate(-44.5 907 597)" text-anchor="middle" dominant-baseline="middle">www.cfchi.com</text>
<text x="1193" y="597" transform="rotate(-44.5 1193 597)" text-anchor="middle" dominant-baseline="middle">www.cfchi.com</text>
<text x="1479" y="597" transform="rotate(-44.5 1479 597)" text-anchor="middle" dominant-baseline="middle">www.cfchi.com</text>
<text x="49" y="816" transform="rotate(-44.5 49 816)" text-anchor="middle" dominant-baseline="middle">www.cfchi.com</text>
<text x="335" y="816" transform="rotate(-44.5 335 816)" text-anchor="middle" dominant-baseline="middle">www.cfchi.com</text>
<text x="621" y="816" transform="rotate(-44.5 621 816)" text-anchor="middle" dominant-baseline="middle">www.cfchi.com</text>
<text x="907" y="816" transform="rotate(-44.5 907 816)" text-anchor="middle" dominant-baseline="middle">www.cfchi.com</text>
<text x="1193" y="816" transform="rotate(-44.5 1193 816)" text-anchor="middle" dominant-baseline="middle">www.cfchi.com</text>
<text x="1479" y="816" transform="rotate(-44.5 1479 816)" text-anchor="middle" dominant-baseline="middle">www.cfchi.com</text>
</g></svg>
<svg width="1688" height="923" shape-rendering="crispEdges">
<rect x="1634" y="23" width="1" height="897" fill="#8c0000"/>
<rect x="1" y="563" width="1684" height="1" fill="#8c0000"/>
<rect x="1" y="904" width="1684" height="1" fill="#8c0000"/>
<path d="M1635,564h50v340h-50z M1636,565v338h48v-338z" fill="#8c0000" fill-rule="evenodd"/>
<rect x="1635" y="71" width="5" height="1" fill="#8c0000"/>
<rect x="1635" y="93" width="2" height="1" fill="#8c0000"/>
<rect x="1635" y="115" width="5" height="1" fill="#8c0000"/>
<rect x="1635" y="137" width="2" height="1" fill="#8c0000"/>
<rect x="1635" y="158" width="5" height="1" fill="#8c0000"/>
<rect x="1635" y="180" width="2" height="1" fill="#8c0000"/>
<rect x="1635" y="202" width="5" height="1" fill="#8c0000"/>
<rect x="1635" y="224" width="2" height="1" fill="#8c0000"/>
<rect x="1635" y="246" width="5" height="1" fill="#8c0000"/>
<rect x="1635" y="268" width="2" height="1" fill="#8c0000"/>
<rect x="1635" y="290" width="5" height="1" fill="#8c0000"/>
<rect x="1635" y="312" width="2" height="1" fill="#8c0000"/>
<rect x="1635" y="334" width="5" height="1" fill="#8c0000"/>
<rect x="1635" y="356" width="2" height="1" fill="#8c0000"/>
<rect x="1635" y="377" width="5" height="1" fill="#8c0000"/>
<rect x="1635" y="399" width="2" height="1" fill="#8c0000"/>
<rect x="1635" y="421" width="5" height="1" fill="#8c0000"/>
<rect x="1635" y="443" width="2" height="1" fill="#8c0000"/>
<rect x="1635" y="465" width="5" height="1" fill="#8c0000"/>
<rect x="1635" y="487" width="2" height="1" fill="#8c0000"/>
<rect x="1635" y="509" width="5" height="1" fill="#8c0000"/>
<rect x="1636" y="585" width="4" height="1" fill="#8c0000"/>
<rect x="1636" y="617" width="1" height="1" fill="#8c0000"/>
<rect x="1636" y="648" width="4" height="1" fill="#8c0000"/>
<rect x="1636" y="679" width="1" height="1" fill="#8c0000"/>
<rect x="1636" y="710" width="4" height="1" fill="#8c0000"/>
<rect x="1636" y="742" width="1" height="1" fill="#8c0000"/>
<rect x="1636" y="773" width="4" height="1" fill="#8c0000"/>
<rect x="1636" y="804" width="1" height="1" fill="#8c0000"/>
<rect x="1636" y="835" width="4" height="1" fill="#8c0000"/>
<rect x="313" y="905" width="1" height="2" fill="#8c0000"/>
<rect x="447" y="905" width="1" height="2" fill="#8c0000"/>
<rect x="747" y="905" width="1" height="2" fill="#8c0000"/>
<rect x="913" y="905" width="1" height="2" fill="#8c0000"/>
<rect x="1080" y="905" width="1" height="2" fill="#8c0000"/>
<rect x="46" y="905" width="1" height="15" fill="#8c0000"/>
<rect x="580" y="905" width="1" height="15" fill="#8c0000"/>
<rect x="1246" y="905" width="1" height="15" fill="#8c0000"/>
</svg>
<div class="yl" style="top:63px">70.00</div>
<div class="yl" style="top:107px">68.00</div>
<div class="yl" style="top:150px">66.00</div>
<div class="yl" style="top:194px">64.00</div>
<div class="yl" style="top:238px">62.00</div>
<div class="yl" style="top:282px">60.00</div>
<div class="yl" style="top:326px">58.00</div>
<div class="yl" style="top:369px">56.00</div>
<div class="yl" style="top:413px">54.00</div>
<div class="yl" style="top:457px">52.00</div>
<div class="yl" style="top:501px">50.00</div>
<div class="yl" style="top:577px">1.00</div>
<div class="yl" style="top:609px">0.90</div>
<div class="yl" style="top:640px">0.80</div>
<div class="yl" style="top:671px">0.70</div>
<div class="yl" style="top:702px">0.60</div>
<div class="yl" style="top:734px">0.50</div>
<div class="yl" style="top:765px">0.40</div>
<div class="yl" style="top:796px">0.30</div>
<div class="yl" style="top:827px">0.20</div>
<div class="abs" style="left:4px;top:25px">文灿股份 (日线)</div>
<svg width="14" height="14" style="left:91px;top:25px"><circle cx="7" cy="7" r="6" fill="#777"/><path d="M4,5.5 l3,3 l3,-3" stroke="#1a1a1a" stroke-width="1" fill="none"/></svg>
<div class="abs" style="left:108px;top:25px">默认主图</div>
<div class="abs" style="left:161px;top:25px;letter-spacing:0.45px">MA5: 51.49</div>
<div class="abs" style="left:231px;top:25px;letter-spacing:0.5px;color:#ff0000">MA10: 54.59</div>
<div class="abs" style="left:308px;top:25px;letter-spacing:0.5px;color:#ffff00">MA20: 58.05</div>
<div class="abs" style="left:384px;top:25px;letter-spacing:0.5px;color:#0000ff">MA60: 61.25</div>
<svg width="14" height="14" style="left:1600px;top:26px"><path d="M6.5,1.5 L11.5,6.5 L6.5,11.5 L1.5,6.5 Z" stroke="#7a7a7a" fill="none"/></svg>
<svg width="14" height="14" style="left:1618px;top:26px"><rect x="1.5" y="1.5" width="11" height="10" rx="2.5" fill="none" stroke="#8a8a8a"/><rect x="8" y="3" width="3" height="7" fill="#8a8a8a"/></svg>
<div class="abs" style="left:795px;top:45px;color:#dcdcdc">71.18</div>
<div class="abs" style="left:1527px;top:535px;color:#dcdcdc">48.53</div>
<div class="abs" style="left:441px;top:549px;width:13px;height:13px;background:#c4501c;color:#fff;font-size:11px;line-height:13px;text-align:center">预</div>
<div class="abs" style="left:507px;top:549px;width:13px;height:13px;background:#8e0000;color:#fff;font-size:11px;line-height:13px;text-align:center">张</div>
<svg width="14" height="14" style="left:2px;top:565px"><circle cx="7" cy="7" r="6" fill="#777"/><path d="M4,5.5 l3,3 l3,-3" stroke="#1a1a1a" stroke-width="1" fill="none"/></svg>
<div class="abs" style="left:19px;top:565px">抄底阴线：1.00</div>
<div class="abs" style="left:14px;top:906px;color:#cc0000">2022年</div>
<div class="abs" style="left:176px;top:905px;width:85px;height:15px;background:#000090;border-left:1px solid #a00000;border-right:1px solid #a00000;color:#fff;line-height:15px;padding-left:0;letter-spacing:0.6px;overflow:hidden">2023/01/09/<span style="display:inline-block;transform:scaleX(1.12);transform-origin:left">一</span></div>
<div class="abs" style="left:582px;top:906px;color:#cc0000">2</div>
<div class="abs" style="left:1248px;top:906px;color:#cc0000">3</div>
<div class="abs" style="left:1647px;top:906px">日线</div>
<div style="position:absolute;left:2px;top:921px;width:35px;height:2px;background:#242526"></div><div style="position:absolute;left:38px;top:921px;width:30px;height:2px;background:#242526"></div><div style="position:absolute;left:69px;top:921px;width:44px;height:2px;background:#242526"></div><div style="position:absolute;left:114px;top:921px;width:32px;height:2px;background:#242526"></div><div style="position:absolute;left:147px;top:921px;width:36px;height:2px;background:#242526"></div><div style="position:absolute;left:184px;top:921px;width:27px;height:2px;background:#242526"></div><div style="position:absolute;left:212px;top:921px;width:34px;height:2px;background:#242526"></div><div style="position:absolute;left:247px;top:921px;width:38px;height:2px;background:#242526"></div><div style="position:absolute;left:286px;top:921px;width:24px;height:2px;background:#242526"></div><div style="position:absolute;left:311px;top:921px;width:23px;height:2px;background:#242526"></div><div style="position:absolute;left:335px;top:921px;width:33px;height:2px;background:#242526"></div><div style="position:absolute;left:369px;top:921px;width:26px;height:2px;background:#242526"></div><div style="position:absolute;left:396px;top:921px;width:34px;height:2px;background:#242526"></div><div style="position:absolute;left:431px;top:921px;width:59px;height:2px;background:#242526"></div><div style="position:absolute;left:491px;top:921px;width:26px;height:2px;background:#242526"></div><div style="position:absolute;left:518px;top:921px;width:27px;height:2px;background:#242526"></div><div style="position:absolute;left:546px;top:921px;width:27px;height:2px;background:#242526"></div><div style="position:absolute;left:574px;top:921px;width:31px;height:2px;background:#242526"></div><div style="position:absolute;left:606px;top:921px;width:26px;height:2px;background:#242526"></div><div style="position:absolute;left:633px;top:921px;width:36px;height:2px;background:#242526"></div><div style="position:absolute;left:670px;top:921px;width:37px;height:2px;background:#242526"></div><div style="position:absolute;left:708px;top:921px;width:37px;height:2px;background:#242526"></div><div style="position:absolute;left:746px;top:921px;width:28px;height:2px;background:#242526"></div><div style="position:absolute;left:775px;top:921px;width:42px;height:2px;background:#242526"></div><div style="position:absolute;left:818px;top:921px;width:30px;height:2px;background:#242526"></div><div style="position:absolute;left:849px;top:921px;width:31px;height:2px;background:#242526"></div><div style="position:absolute;left:881px;top:921px;width:681px;height:2px;background:#242526"></div><div style="position:absolute;left:1563px;top:921px;width:35px;height:2px;background:#242526"></div><div style="position:absolute;left:1599px;top:921px;width:36px;height:2px;background:#242526"></div><div style="position:absolute;left:1636px;top:921px;width:49px;height:2px;background:#242526"></div>
</body></html>
